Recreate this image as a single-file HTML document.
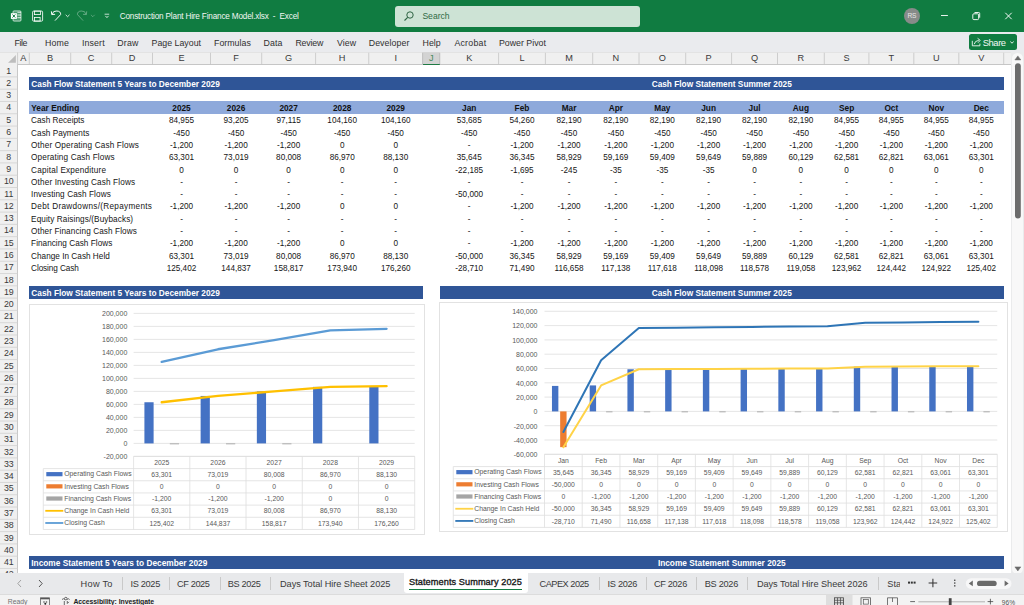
<!DOCTYPE html><html><head><meta charset="utf-8"><style>
*{margin:0;padding:0;box-sizing:border-box}
html,body{width:1024px;height:605px;overflow:hidden;background:#fff;font-family:"Liberation Sans", sans-serif;}
.abs{position:absolute}
.t{position:absolute;white-space:nowrap;line-height:1}
</style></head><body>

<div class="abs" style="left:0;top:0;width:1024px;height:32px;background:#107C41"></div>
<div class="t" style="left:119.7px;top:13px;font-size:8.2px;color:#F2F7F3;letter-spacing:-0.180px">Construction Plant Hire Finance Model.xlsx&nbsp; - &nbsp;Excel</div>
<div class="abs" style="left:395px;top:5.5px;width:245px;height:21px;background:#CDE3D5;border-radius:3px"></div>
<div class="t" style="left:422.4px;top:11.5px;font-size:8.6px;color:#2F6B45">Search</div>
<svg class="abs" style="left:403px;top:10px" width="12" height="12" viewBox="0 0 12 12"><circle cx="7" cy="5" r="3.2" fill="none" stroke="#2E6443" stroke-width="1"/><line x1="4.7" y1="7.3" x2="1.5" y2="10.5" stroke="#2E6443" stroke-width="1.1"/></svg>
<div class="abs" style="left:904.4px;top:8px;width:16px;height:16px;border-radius:50%;background:#878B89"></div>
<div class="t" style="left:907.6px;top:12.6px;font-size:6.6px;color:#E8E8E8;letter-spacing:-0.4px">RS</div>
<svg class="abs" style="left:0;top:0" width="1024" height="32">
<line x1="941" y1="15.5" x2="947.9" y2="15.5" stroke="#fff" stroke-width="0.9"/>
<rect x="972.8" y="13.8" width="5.8" height="5.8" rx="1" fill="none" stroke="#fff" stroke-width="0.9"/>
<path d="M974.5 12.5 h4.2 a1 1 0 0 1 1 1 v4.2" fill="none" stroke="#fff" stroke-width="0.9"/>
<path d="M1005.3 12.8 L1011.7 19.2 M1011.7 12.8 L1005.3 19.2" stroke="#fff" stroke-width="0.95"/>
</svg>
<svg class="abs" style="left:0;top:0" width="120" height="32">
<rect x="13" y="10.9" width="8" height="10.2" rx="1" fill="none" stroke="#fff" stroke-opacity="0.75" stroke-width="0.9"/>
<rect x="13" y="10.9" width="8" height="10.2" rx="1" fill="#fff" fill-opacity="0.25"/>
<path d="M17.4 12.3 h3.6 M17.4 15 h3.6 M17.4 17.7 h3.6" stroke="#fff" stroke-width="0.8"/>
<rect x="10.9" y="13.2" width="6" height="5.7" fill="#fff"/>
<path d="M12.5 14.5 l2.8 3.1 M15.3 14.5 l-2.8 3.1" stroke="#107C41" stroke-width="1"/>
<rect x="32.6" y="11.1" width="10" height="10" rx="1" fill="none" stroke="#fff" stroke-width="0.85"/>
<rect x="34.5" y="11.1" width="6" height="3.5" fill="none" stroke="#fff" stroke-width="0.8"/>
<rect x="34.5" y="17.5" width="5.6" height="3.6" fill="none" stroke="#fff" stroke-width="0.8"/>
<path d="M52.4 14 A4.1 3.3 0 0 1 60.6 14.6 L55 20.6" stroke="#fff" stroke-width="0.95" fill="none"/>
<path d="M51.4 11.3 L51.7 14.6 L55.1 14.3" stroke="#fff" stroke-width="0.95" fill="none"/>
<path d="M65.7 14.8 l1.9 1.9 l1.9 -1.9" stroke="#fff" stroke-width="0.8" fill="none"/>
<g stroke="#fff" stroke-opacity="0.35" fill="none" stroke-width="0.95">
<path d="M85.7 14 A4.1 3.3 0 0 0 77.5 14.6 L83.1 20.6"/>
<path d="M86.7 11.3 L86.4 14.6 L83 14.3"/>
<path d="M90.9 14.8 l1.9 1.9 l1.9 -1.9" stroke-width="0.8"/>
</g>
<line x1="104.6" y1="14.2" x2="109.2" y2="14.2" stroke="#fff" stroke-width="0.75"/>
<path d="M105.4 15.9 l1.55 1.7 l1.55 -1.7" stroke="#fff" stroke-width="0.8" fill="none"/>
</svg>
<div class="abs" style="left:0;top:32px;width:1024px;height:20px;background:#EAEBEE"></div>
<div class="t" style="left:14.5px;top:39px;font-size:8.8px;color:#303030;letter-spacing:-0.426px">File</div>
<div class="t" style="left:45px;top:39px;font-size:8.8px;color:#303030;letter-spacing:0.176px">Home</div>
<div class="t" style="left:82px;top:39px;font-size:8.8px;color:#303030;letter-spacing:0.119px">Insert</div>
<div class="t" style="left:117.3px;top:39px;font-size:8.8px;color:#303030;letter-spacing:0.155px">Draw</div>
<div class="t" style="left:151.5px;top:39px;font-size:8.8px;color:#303030;letter-spacing:0.009px">Page Layout</div>
<div class="t" style="left:214px;top:39px;font-size:8.8px;color:#303030;letter-spacing:0.018px">Formulas</div>
<div class="t" style="left:263.6px;top:39px;font-size:8.8px;color:#303030;letter-spacing:0.071px">Data</div>
<div class="t" style="left:295.4px;top:39px;font-size:8.8px;color:#303030;letter-spacing:-0.191px">Review</div>
<div class="t" style="left:336.9px;top:39px;font-size:8.8px;color:#303030;letter-spacing:0.062px">View</div>
<div class="t" style="left:368.7px;top:39px;font-size:8.8px;color:#303030;letter-spacing:0.086px">Developer</div>
<div class="t" style="left:422.6px;top:39px;font-size:8.8px;color:#303030;letter-spacing:0.001px">Help</div>
<div class="t" style="left:454.4px;top:39px;font-size:8.8px;color:#303030;letter-spacing:0.229px">Acrobat</div>
<div class="t" style="left:498.9px;top:39px;font-size:8.8px;color:#303030;letter-spacing:0.015px">Power Pivot</div>
<div class="abs" style="left:969px;top:34px;width:47.5px;height:16px;background:#107C41;border-radius:2.5px"></div>
<div class="t" style="left:982.8px;top:38.2px;font-size:9.4px;color:#F4F8F5;letter-spacing:-0.45px">Share</div>
<svg class="abs" style="left:969px;top:34px" width="48" height="16">
<path d="M3.3 6.8 v5 h7.6 v-2.2" fill="none" stroke="#fff" stroke-width="0.85"/>
<path d="M5.2 10.2 q0.6 -3.4 4.6 -3.9" fill="none" stroke="#fff" stroke-width="0.85"/>
<path d="M8.6 4.3 l2.6 2 l-2.1 2.4" fill="none" stroke="#fff" stroke-width="0.85"/>
<path d="M41.3 7.6 l1.7 1.6 l1.7 -1.6" stroke="#fff" stroke-width="0.9" fill="none"/>
</svg>
<div class="abs" style="left:0;top:52px;width:1010.8px;height:13px;background:#F0F0F0;border-bottom:1px solid #C6C6C6"></div>
<div class="abs" style="left:422.3px;top:52.2px;width:17.50000000000002px;height:11.8px;background:#D3D3D3;border:0.7px solid #C2C2C2;border-bottom:none"></div>
<div class="abs" style="left:422.7px;top:63.7px;width:17.100000000000023px;height:1.3px;background:#1F7A44"></div>
<svg class="abs" style="left:0;top:52px" width="1011" height="13"><line x1="29.3" y1="0.5" x2="29.3" y2="12.4" stroke="#C4C4C4" stroke-width="0.8"/><line x1="70.7" y1="0.5" x2="70.7" y2="12.4" stroke="#C4C4C4" stroke-width="0.8"/><line x1="111.7" y1="0.5" x2="111.7" y2="12.4" stroke="#C4C4C4" stroke-width="0.8"/><line x1="152.5" y1="0.5" x2="152.5" y2="12.4" stroke="#C4C4C4" stroke-width="0.8"/><line x1="210.5" y1="0.5" x2="210.5" y2="12.4" stroke="#C4C4C4" stroke-width="0.8"/><line x1="261.7" y1="0.5" x2="261.7" y2="12.4" stroke="#C4C4C4" stroke-width="0.8"/><line x1="315.6" y1="0.5" x2="315.6" y2="12.4" stroke="#C4C4C4" stroke-width="0.8"/><line x1="368.75" y1="0.5" x2="368.75" y2="12.4" stroke="#C4C4C4" stroke-width="0.8"/><line x1="422.7" y1="0.5" x2="422.7" y2="12.4" stroke="#C4C4C4" stroke-width="0.8"/><line x1="439.8" y1="0.5" x2="439.8" y2="12.4" stroke="#C4C4C4" stroke-width="0.8"/><line x1="498.6" y1="0.5" x2="498.6" y2="12.4" stroke="#C4C4C4" stroke-width="0.8"/><line x1="545.4" y1="0.5" x2="545.4" y2="12.4" stroke="#C4C4C4" stroke-width="0.8"/><line x1="592.7" y1="0.5" x2="592.7" y2="12.4" stroke="#C4C4C4" stroke-width="0.8"/><line x1="639.0" y1="0.5" x2="639.0" y2="12.4" stroke="#C4C4C4" stroke-width="0.8"/><line x1="685.7" y1="0.5" x2="685.7" y2="12.4" stroke="#C4C4C4" stroke-width="0.8"/><line x1="731.6" y1="0.5" x2="731.6" y2="12.4" stroke="#C4C4C4" stroke-width="0.8"/><line x1="777.5" y1="0.5" x2="777.5" y2="12.4" stroke="#C4C4C4" stroke-width="0.8"/><line x1="824.3" y1="0.5" x2="824.3" y2="12.4" stroke="#C4C4C4" stroke-width="0.8"/><line x1="868.9" y1="0.5" x2="868.9" y2="12.4" stroke="#C4C4C4" stroke-width="0.8"/><line x1="913.8" y1="0.5" x2="913.8" y2="12.4" stroke="#C4C4C4" stroke-width="0.8"/><line x1="958.8" y1="0.5" x2="958.8" y2="12.4" stroke="#C4C4C4" stroke-width="0.8"/><line x1="1003.7" y1="0.5" x2="1003.7" y2="12.4" stroke="#C4C4C4" stroke-width="0.8"/><line x1="17.6" y1="0" x2="17.6" y2="12.4" stroke="#C4C4C4" stroke-width="0.8"/><path d="M8.1 10.7 L15.9 10.7 L15.9 2.9 Z" fill="#BDBDBD"/><line x1="0" y1="0.5" x2="1010.8" y2="0.5" stroke="#DCDCDC" stroke-width="0.7"/></svg>
<div class="t" style="left:17.6px;width:11.7px;text-align:center;top:54.2px;font-size:9.2px;color:#3A3A3A">A</div>
<div class="t" style="left:29.3px;width:41.400000000000006px;text-align:center;top:54.2px;font-size:9.2px;color:#3A3A3A">B</div>
<div class="t" style="left:70.7px;width:41.0px;text-align:center;top:54.2px;font-size:9.2px;color:#3A3A3A">C</div>
<div class="t" style="left:111.7px;width:40.8px;text-align:center;top:54.2px;font-size:9.2px;color:#3A3A3A">D</div>
<div class="t" style="left:152.5px;width:58.0px;text-align:center;top:54.2px;font-size:9.2px;color:#3A3A3A">E</div>
<div class="t" style="left:210.5px;width:51.19999999999999px;text-align:center;top:54.2px;font-size:9.2px;color:#3A3A3A">F</div>
<div class="t" style="left:261.7px;width:53.900000000000034px;text-align:center;top:54.2px;font-size:9.2px;color:#3A3A3A">G</div>
<div class="t" style="left:315.6px;width:53.14999999999998px;text-align:center;top:54.2px;font-size:9.2px;color:#3A3A3A">H</div>
<div class="t" style="left:368.75px;width:53.94999999999999px;text-align:center;top:54.2px;font-size:9.2px;color:#3A3A3A">I</div>
<div class="t" style="left:422.7px;width:17.100000000000023px;text-align:center;top:54.2px;font-size:9.2px;color:#4A8A5E">J</div>
<div class="t" style="left:439.8px;width:58.80000000000001px;text-align:center;top:54.2px;font-size:9.2px;color:#3A3A3A">K</div>
<div class="t" style="left:498.6px;width:46.799999999999955px;text-align:center;top:54.2px;font-size:9.2px;color:#3A3A3A">L</div>
<div class="t" style="left:545.4px;width:47.30000000000007px;text-align:center;top:54.2px;font-size:9.2px;color:#3A3A3A">M</div>
<div class="t" style="left:592.7px;width:46.299999999999955px;text-align:center;top:54.2px;font-size:9.2px;color:#3A3A3A">N</div>
<div class="t" style="left:639.0px;width:46.700000000000045px;text-align:center;top:54.2px;font-size:9.2px;color:#3A3A3A">O</div>
<div class="t" style="left:685.7px;width:45.89999999999998px;text-align:center;top:54.2px;font-size:9.2px;color:#3A3A3A">P</div>
<div class="t" style="left:731.6px;width:45.89999999999998px;text-align:center;top:54.2px;font-size:9.2px;color:#3A3A3A">Q</div>
<div class="t" style="left:777.5px;width:46.799999999999955px;text-align:center;top:54.2px;font-size:9.2px;color:#3A3A3A">R</div>
<div class="t" style="left:824.3px;width:44.60000000000002px;text-align:center;top:54.2px;font-size:9.2px;color:#3A3A3A">S</div>
<div class="t" style="left:868.9px;width:44.89999999999998px;text-align:center;top:54.2px;font-size:9.2px;color:#3A3A3A">T</div>
<div class="t" style="left:913.8px;width:45.0px;text-align:center;top:54.2px;font-size:9.2px;color:#3A3A3A">U</div>
<div class="t" style="left:958.8px;width:44.90000000000009px;text-align:center;top:54.2px;font-size:9.2px;color:#3A3A3A">V</div>
<div class="abs" style="left:0;top:64.4px;width:18.2px;height:509px;background:#F0F0F0;border-right:1px solid #C8C8C8"></div>
<svg class="abs" style="left:0;top:0" width="18" height="574"><line x1="0" y1="76.89" x2="17.6" y2="76.89" stroke="#D0D0D0" stroke-width="0.8"/><line x1="0" y1="89.18" x2="17.6" y2="89.18" stroke="#D0D0D0" stroke-width="0.8"/><line x1="0" y1="101.47" x2="17.6" y2="101.47" stroke="#D0D0D0" stroke-width="0.8"/><line x1="0" y1="113.76" x2="17.6" y2="113.76" stroke="#D0D0D0" stroke-width="0.8"/><line x1="0" y1="126.05" x2="17.6" y2="126.05" stroke="#D0D0D0" stroke-width="0.8"/><line x1="0" y1="138.34" x2="17.6" y2="138.34" stroke="#D0D0D0" stroke-width="0.8"/><line x1="0" y1="150.63" x2="17.6" y2="150.63" stroke="#D0D0D0" stroke-width="0.8"/><line x1="0" y1="162.92" x2="17.6" y2="162.92" stroke="#D0D0D0" stroke-width="0.8"/><line x1="0" y1="175.21" x2="17.6" y2="175.21" stroke="#D0D0D0" stroke-width="0.8"/><line x1="0" y1="187.50" x2="17.6" y2="187.50" stroke="#D0D0D0" stroke-width="0.8"/><line x1="0" y1="199.79" x2="17.6" y2="199.79" stroke="#D0D0D0" stroke-width="0.8"/><line x1="0" y1="212.08" x2="17.6" y2="212.08" stroke="#D0D0D0" stroke-width="0.8"/><line x1="0" y1="224.37" x2="17.6" y2="224.37" stroke="#D0D0D0" stroke-width="0.8"/><line x1="0" y1="236.66" x2="17.6" y2="236.66" stroke="#D0D0D0" stroke-width="0.8"/><line x1="0" y1="248.95" x2="17.6" y2="248.95" stroke="#D0D0D0" stroke-width="0.8"/><line x1="0" y1="261.24" x2="17.6" y2="261.24" stroke="#D0D0D0" stroke-width="0.8"/><line x1="0" y1="273.53" x2="17.6" y2="273.53" stroke="#D0D0D0" stroke-width="0.8"/><line x1="0" y1="285.82" x2="17.6" y2="285.82" stroke="#D0D0D0" stroke-width="0.8"/><line x1="0" y1="298.11" x2="17.6" y2="298.11" stroke="#D0D0D0" stroke-width="0.8"/><line x1="0" y1="310.40" x2="17.6" y2="310.40" stroke="#D0D0D0" stroke-width="0.8"/><line x1="0" y1="322.69" x2="17.6" y2="322.69" stroke="#D0D0D0" stroke-width="0.8"/><line x1="0" y1="334.98" x2="17.6" y2="334.98" stroke="#D0D0D0" stroke-width="0.8"/><line x1="0" y1="347.27" x2="17.6" y2="347.27" stroke="#D0D0D0" stroke-width="0.8"/><line x1="0" y1="359.56" x2="17.6" y2="359.56" stroke="#D0D0D0" stroke-width="0.8"/><line x1="0" y1="371.85" x2="17.6" y2="371.85" stroke="#D0D0D0" stroke-width="0.8"/><line x1="0" y1="384.14" x2="17.6" y2="384.14" stroke="#D0D0D0" stroke-width="0.8"/><line x1="0" y1="396.43" x2="17.6" y2="396.43" stroke="#D0D0D0" stroke-width="0.8"/><line x1="0" y1="408.72" x2="17.6" y2="408.72" stroke="#D0D0D0" stroke-width="0.8"/><line x1="0" y1="421.01" x2="17.6" y2="421.01" stroke="#D0D0D0" stroke-width="0.8"/><line x1="0" y1="433.30" x2="17.6" y2="433.30" stroke="#D0D0D0" stroke-width="0.8"/><line x1="0" y1="445.59" x2="17.6" y2="445.59" stroke="#D0D0D0" stroke-width="0.8"/><line x1="0" y1="457.88" x2="17.6" y2="457.88" stroke="#D0D0D0" stroke-width="0.8"/><line x1="0" y1="470.17" x2="17.6" y2="470.17" stroke="#D0D0D0" stroke-width="0.8"/><line x1="0" y1="482.46" x2="17.6" y2="482.46" stroke="#D0D0D0" stroke-width="0.8"/><line x1="0" y1="494.75" x2="17.6" y2="494.75" stroke="#D0D0D0" stroke-width="0.8"/><line x1="0" y1="507.04" x2="17.6" y2="507.04" stroke="#D0D0D0" stroke-width="0.8"/><line x1="0" y1="519.33" x2="17.6" y2="519.33" stroke="#D0D0D0" stroke-width="0.8"/><line x1="0" y1="531.62" x2="17.6" y2="531.62" stroke="#D0D0D0" stroke-width="0.8"/><line x1="0" y1="543.91" x2="17.6" y2="543.91" stroke="#D0D0D0" stroke-width="0.8"/><line x1="0" y1="556.20" x2="17.6" y2="556.20" stroke="#D0D0D0" stroke-width="0.8"/><line x1="0" y1="568.49" x2="17.6" y2="568.49" stroke="#D0D0D0" stroke-width="0.8"/></svg>
<div class="t" style="left:0;width:17.6px;text-align:center;top:66.60px;font-size:8.8px;color:#3A3A3A">1</div>
<div class="t" style="left:0;width:17.6px;text-align:center;top:78.89px;font-size:8.8px;color:#3A3A3A">2</div>
<div class="t" style="left:0;width:17.6px;text-align:center;top:91.18px;font-size:8.8px;color:#3A3A3A">3</div>
<div class="t" style="left:0;width:17.6px;text-align:center;top:103.47px;font-size:8.8px;color:#3A3A3A">4</div>
<div class="t" style="left:0;width:17.6px;text-align:center;top:115.76px;font-size:8.8px;color:#3A3A3A">5</div>
<div class="t" style="left:0;width:17.6px;text-align:center;top:128.05px;font-size:8.8px;color:#3A3A3A">6</div>
<div class="t" style="left:0;width:17.6px;text-align:center;top:140.34px;font-size:8.8px;color:#3A3A3A">7</div>
<div class="t" style="left:0;width:17.6px;text-align:center;top:152.63px;font-size:8.8px;color:#3A3A3A">8</div>
<div class="t" style="left:0;width:17.6px;text-align:center;top:164.92px;font-size:8.8px;color:#3A3A3A">9</div>
<div class="t" style="left:0;width:17.6px;text-align:center;top:177.21px;font-size:8.8px;color:#3A3A3A">10</div>
<div class="t" style="left:0;width:17.6px;text-align:center;top:189.50px;font-size:8.8px;color:#3A3A3A">11</div>
<div class="t" style="left:0;width:17.6px;text-align:center;top:201.79px;font-size:8.8px;color:#3A3A3A">12</div>
<div class="t" style="left:0;width:17.6px;text-align:center;top:214.08px;font-size:8.8px;color:#3A3A3A">13</div>
<div class="t" style="left:0;width:17.6px;text-align:center;top:226.37px;font-size:8.8px;color:#3A3A3A">14</div>
<div class="t" style="left:0;width:17.6px;text-align:center;top:238.66px;font-size:8.8px;color:#3A3A3A">15</div>
<div class="t" style="left:0;width:17.6px;text-align:center;top:250.95px;font-size:8.8px;color:#3A3A3A">16</div>
<div class="t" style="left:0;width:17.6px;text-align:center;top:263.24px;font-size:8.8px;color:#3A3A3A">17</div>
<div class="t" style="left:0;width:17.6px;text-align:center;top:275.53px;font-size:8.8px;color:#3A3A3A">18</div>
<div class="t" style="left:0;width:17.6px;text-align:center;top:287.82px;font-size:8.8px;color:#3A3A3A">19</div>
<div class="t" style="left:0;width:17.6px;text-align:center;top:300.11px;font-size:8.8px;color:#3A3A3A">20</div>
<div class="t" style="left:0;width:17.6px;text-align:center;top:312.40px;font-size:8.8px;color:#3A3A3A">21</div>
<div class="t" style="left:0;width:17.6px;text-align:center;top:324.69px;font-size:8.8px;color:#3A3A3A">22</div>
<div class="t" style="left:0;width:17.6px;text-align:center;top:336.98px;font-size:8.8px;color:#3A3A3A">23</div>
<div class="t" style="left:0;width:17.6px;text-align:center;top:349.27px;font-size:8.8px;color:#3A3A3A">24</div>
<div class="t" style="left:0;width:17.6px;text-align:center;top:361.56px;font-size:8.8px;color:#3A3A3A">25</div>
<div class="t" style="left:0;width:17.6px;text-align:center;top:373.85px;font-size:8.8px;color:#3A3A3A">26</div>
<div class="t" style="left:0;width:17.6px;text-align:center;top:386.14px;font-size:8.8px;color:#3A3A3A">27</div>
<div class="t" style="left:0;width:17.6px;text-align:center;top:398.43px;font-size:8.8px;color:#3A3A3A">28</div>
<div class="t" style="left:0;width:17.6px;text-align:center;top:410.72px;font-size:8.8px;color:#3A3A3A">29</div>
<div class="t" style="left:0;width:17.6px;text-align:center;top:423.01px;font-size:8.8px;color:#3A3A3A">30</div>
<div class="t" style="left:0;width:17.6px;text-align:center;top:435.30px;font-size:8.8px;color:#3A3A3A">31</div>
<div class="t" style="left:0;width:17.6px;text-align:center;top:447.59px;font-size:8.8px;color:#3A3A3A">32</div>
<div class="t" style="left:0;width:17.6px;text-align:center;top:459.88px;font-size:8.8px;color:#3A3A3A">33</div>
<div class="t" style="left:0;width:17.6px;text-align:center;top:472.17px;font-size:8.8px;color:#3A3A3A">34</div>
<div class="t" style="left:0;width:17.6px;text-align:center;top:484.46px;font-size:8.8px;color:#3A3A3A">35</div>
<div class="t" style="left:0;width:17.6px;text-align:center;top:496.75px;font-size:8.8px;color:#3A3A3A">36</div>
<div class="t" style="left:0;width:17.6px;text-align:center;top:509.04px;font-size:8.8px;color:#3A3A3A">37</div>
<div class="t" style="left:0;width:17.6px;text-align:center;top:521.33px;font-size:8.8px;color:#3A3A3A">38</div>
<div class="t" style="left:0;width:17.6px;text-align:center;top:533.62px;font-size:8.8px;color:#3A3A3A">39</div>
<div class="t" style="left:0;width:17.6px;text-align:center;top:545.91px;font-size:8.8px;color:#3A3A3A">40</div>
<div class="t" style="left:0;width:17.6px;text-align:center;top:558.20px;font-size:8.8px;color:#3A3A3A">41</div>
<div class="t" style="left:0;width:17.6px;text-align:center;top:570.49px;font-size:8.8px;color:#3A3A3A">42</div>
<div class="abs" style="left:29.3px;top:76.89px;width:974.40px;height:12.74px;background:#2F5597"></div>
<div class="t" style="left:31.30px;top:79.59px;font-size:8.3px;font-weight:bold;color:#fff;">Cash Flow Statement 5 Years to December 2029</div>
<div class="t" style="left:439.80px;width:563.90px;text-align:center;top:79.59px;font-size:8.3px;font-weight:bold;color:#fff;">Cash Flow Statement Summer 2025</div>
<div class="abs" style="left:29.3px;top:101.47px;width:974.40px;height:12.74px;background:#8EA9DB"></div>
<div class="t" style="left:31.30px;top:104.17px;font-size:8.3px;font-weight:bold;color:#111;">Year Ending</div>
<div class="t" style="left:152.50px;width:58.00px;text-align:center;top:104.17px;font-size:8.3px;font-weight:bold;color:#111;">2025</div>
<div class="t" style="left:210.50px;width:51.20px;text-align:center;top:104.17px;font-size:8.3px;font-weight:bold;color:#111;">2026</div>
<div class="t" style="left:261.70px;width:53.90px;text-align:center;top:104.17px;font-size:8.3px;font-weight:bold;color:#111;">2027</div>
<div class="t" style="left:315.60px;width:53.15px;text-align:center;top:104.17px;font-size:8.3px;font-weight:bold;color:#111;">2028</div>
<div class="t" style="left:368.75px;width:53.95px;text-align:center;top:104.17px;font-size:8.3px;font-weight:bold;color:#111;">2029</div>
<div class="t" style="left:439.80px;width:58.80px;text-align:center;top:104.17px;font-size:8.3px;font-weight:bold;color:#111;">Jan</div>
<div class="t" style="left:498.60px;width:46.80px;text-align:center;top:104.17px;font-size:8.3px;font-weight:bold;color:#111;">Feb</div>
<div class="t" style="left:545.40px;width:47.30px;text-align:center;top:104.17px;font-size:8.3px;font-weight:bold;color:#111;">Mar</div>
<div class="t" style="left:592.70px;width:46.30px;text-align:center;top:104.17px;font-size:8.3px;font-weight:bold;color:#111;">Apr</div>
<div class="t" style="left:639.00px;width:46.70px;text-align:center;top:104.17px;font-size:8.3px;font-weight:bold;color:#111;">May</div>
<div class="t" style="left:685.70px;width:45.90px;text-align:center;top:104.17px;font-size:8.3px;font-weight:bold;color:#111;">Jun</div>
<div class="t" style="left:731.60px;width:45.90px;text-align:center;top:104.17px;font-size:8.3px;font-weight:bold;color:#111;">Jul</div>
<div class="t" style="left:777.50px;width:46.80px;text-align:center;top:104.17px;font-size:8.3px;font-weight:bold;color:#111;">Aug</div>
<div class="t" style="left:824.30px;width:44.60px;text-align:center;top:104.17px;font-size:8.3px;font-weight:bold;color:#111;">Sep</div>
<div class="t" style="left:868.90px;width:44.90px;text-align:center;top:104.17px;font-size:8.3px;font-weight:bold;color:#111;">Oct</div>
<div class="t" style="left:913.80px;width:45.00px;text-align:center;top:104.17px;font-size:8.3px;font-weight:bold;color:#111;">Nov</div>
<div class="t" style="left:958.80px;width:44.90px;text-align:center;top:104.17px;font-size:8.3px;font-weight:bold;color:#111;">Dec</div>
<div class="t" style="left:31.10px;top:117.46px;font-size:8.2px;font-weight:normal;color:#151515;letter-spacing:0.007px;">Cash Receipts</div>
<div class="t" style="left:152.50px;width:58.00px;text-align:center;top:117.46px;font-size:8.2px;font-weight:normal;color:#151515;">84,955</div>
<div class="t" style="left:210.50px;width:51.20px;text-align:center;top:117.46px;font-size:8.2px;font-weight:normal;color:#151515;">93,205</div>
<div class="t" style="left:261.70px;width:53.90px;text-align:center;top:117.46px;font-size:8.2px;font-weight:normal;color:#151515;">97,115</div>
<div class="t" style="left:315.60px;width:53.15px;text-align:center;top:117.46px;font-size:8.2px;font-weight:normal;color:#151515;">104,160</div>
<div class="t" style="left:368.75px;width:53.95px;text-align:center;top:117.46px;font-size:8.2px;font-weight:normal;color:#151515;">104,160</div>
<div class="t" style="left:439.80px;width:58.80px;text-align:center;top:117.46px;font-size:8.2px;font-weight:normal;color:#151515;">53,685</div>
<div class="t" style="left:498.60px;width:46.80px;text-align:center;top:117.46px;font-size:8.2px;font-weight:normal;color:#151515;">54,260</div>
<div class="t" style="left:545.40px;width:47.30px;text-align:center;top:117.46px;font-size:8.2px;font-weight:normal;color:#151515;">82,190</div>
<div class="t" style="left:592.70px;width:46.30px;text-align:center;top:117.46px;font-size:8.2px;font-weight:normal;color:#151515;">82,190</div>
<div class="t" style="left:639.00px;width:46.70px;text-align:center;top:117.46px;font-size:8.2px;font-weight:normal;color:#151515;">82,190</div>
<div class="t" style="left:685.70px;width:45.90px;text-align:center;top:117.46px;font-size:8.2px;font-weight:normal;color:#151515;">82,190</div>
<div class="t" style="left:731.60px;width:45.90px;text-align:center;top:117.46px;font-size:8.2px;font-weight:normal;color:#151515;">82,190</div>
<div class="t" style="left:777.50px;width:46.80px;text-align:center;top:117.46px;font-size:8.2px;font-weight:normal;color:#151515;">82,190</div>
<div class="t" style="left:824.30px;width:44.60px;text-align:center;top:117.46px;font-size:8.2px;font-weight:normal;color:#151515;">84,955</div>
<div class="t" style="left:868.90px;width:44.90px;text-align:center;top:117.46px;font-size:8.2px;font-weight:normal;color:#151515;">84,955</div>
<div class="t" style="left:913.80px;width:45.00px;text-align:center;top:117.46px;font-size:8.2px;font-weight:normal;color:#151515;">84,955</div>
<div class="t" style="left:958.80px;width:44.90px;text-align:center;top:117.46px;font-size:8.2px;font-weight:normal;color:#151515;">84,955</div>
<div class="t" style="left:31.10px;top:129.75px;font-size:8.2px;font-weight:normal;color:#151515;letter-spacing:0.035px;">Cash Payments</div>
<div class="t" style="left:152.50px;width:58.00px;text-align:center;top:129.75px;font-size:8.2px;font-weight:normal;color:#151515;">-450</div>
<div class="t" style="left:210.50px;width:51.20px;text-align:center;top:129.75px;font-size:8.2px;font-weight:normal;color:#151515;">-450</div>
<div class="t" style="left:261.70px;width:53.90px;text-align:center;top:129.75px;font-size:8.2px;font-weight:normal;color:#151515;">-450</div>
<div class="t" style="left:315.60px;width:53.15px;text-align:center;top:129.75px;font-size:8.2px;font-weight:normal;color:#151515;">-450</div>
<div class="t" style="left:368.75px;width:53.95px;text-align:center;top:129.75px;font-size:8.2px;font-weight:normal;color:#151515;">-450</div>
<div class="t" style="left:439.80px;width:58.80px;text-align:center;top:129.75px;font-size:8.2px;font-weight:normal;color:#151515;">-450</div>
<div class="t" style="left:498.60px;width:46.80px;text-align:center;top:129.75px;font-size:8.2px;font-weight:normal;color:#151515;">-450</div>
<div class="t" style="left:545.40px;width:47.30px;text-align:center;top:129.75px;font-size:8.2px;font-weight:normal;color:#151515;">-450</div>
<div class="t" style="left:592.70px;width:46.30px;text-align:center;top:129.75px;font-size:8.2px;font-weight:normal;color:#151515;">-450</div>
<div class="t" style="left:639.00px;width:46.70px;text-align:center;top:129.75px;font-size:8.2px;font-weight:normal;color:#151515;">-450</div>
<div class="t" style="left:685.70px;width:45.90px;text-align:center;top:129.75px;font-size:8.2px;font-weight:normal;color:#151515;">-450</div>
<div class="t" style="left:731.60px;width:45.90px;text-align:center;top:129.75px;font-size:8.2px;font-weight:normal;color:#151515;">-450</div>
<div class="t" style="left:777.50px;width:46.80px;text-align:center;top:129.75px;font-size:8.2px;font-weight:normal;color:#151515;">-450</div>
<div class="t" style="left:824.30px;width:44.60px;text-align:center;top:129.75px;font-size:8.2px;font-weight:normal;color:#151515;">-450</div>
<div class="t" style="left:868.90px;width:44.90px;text-align:center;top:129.75px;font-size:8.2px;font-weight:normal;color:#151515;">-450</div>
<div class="t" style="left:913.80px;width:45.00px;text-align:center;top:129.75px;font-size:8.2px;font-weight:normal;color:#151515;">-450</div>
<div class="t" style="left:958.80px;width:44.90px;text-align:center;top:129.75px;font-size:8.2px;font-weight:normal;color:#151515;">-450</div>
<div class="t" style="left:31.10px;top:142.04px;font-size:8.2px;font-weight:normal;color:#151515;letter-spacing:0.160px;">Other Operating Cash Flows</div>
<div class="t" style="left:152.50px;width:58.00px;text-align:center;top:142.04px;font-size:8.2px;font-weight:normal;color:#151515;">-1,200</div>
<div class="t" style="left:210.50px;width:51.20px;text-align:center;top:142.04px;font-size:8.2px;font-weight:normal;color:#151515;">-1,200</div>
<div class="t" style="left:261.70px;width:53.90px;text-align:center;top:142.04px;font-size:8.2px;font-weight:normal;color:#151515;">-1,200</div>
<div class="t" style="left:315.60px;width:53.15px;text-align:center;top:142.04px;font-size:8.2px;font-weight:normal;color:#151515;">0</div>
<div class="t" style="left:368.75px;width:53.95px;text-align:center;top:142.04px;font-size:8.2px;font-weight:normal;color:#151515;">0</div>
<div class="t" style="left:439.80px;width:58.80px;text-align:center;top:142.04px;font-size:8.2px;font-weight:normal;color:#151515;">-</div>
<div class="t" style="left:498.60px;width:46.80px;text-align:center;top:142.04px;font-size:8.2px;font-weight:normal;color:#151515;">-1,200</div>
<div class="t" style="left:545.40px;width:47.30px;text-align:center;top:142.04px;font-size:8.2px;font-weight:normal;color:#151515;">-1,200</div>
<div class="t" style="left:592.70px;width:46.30px;text-align:center;top:142.04px;font-size:8.2px;font-weight:normal;color:#151515;">-1,200</div>
<div class="t" style="left:639.00px;width:46.70px;text-align:center;top:142.04px;font-size:8.2px;font-weight:normal;color:#151515;">-1,200</div>
<div class="t" style="left:685.70px;width:45.90px;text-align:center;top:142.04px;font-size:8.2px;font-weight:normal;color:#151515;">-1,200</div>
<div class="t" style="left:731.60px;width:45.90px;text-align:center;top:142.04px;font-size:8.2px;font-weight:normal;color:#151515;">-1,200</div>
<div class="t" style="left:777.50px;width:46.80px;text-align:center;top:142.04px;font-size:8.2px;font-weight:normal;color:#151515;">-1,200</div>
<div class="t" style="left:824.30px;width:44.60px;text-align:center;top:142.04px;font-size:8.2px;font-weight:normal;color:#151515;">-1,200</div>
<div class="t" style="left:868.90px;width:44.90px;text-align:center;top:142.04px;font-size:8.2px;font-weight:normal;color:#151515;">-1,200</div>
<div class="t" style="left:913.80px;width:45.00px;text-align:center;top:142.04px;font-size:8.2px;font-weight:normal;color:#151515;">-1,200</div>
<div class="t" style="left:958.80px;width:44.90px;text-align:center;top:142.04px;font-size:8.2px;font-weight:normal;color:#151515;">-1,200</div>
<div class="t" style="left:31.10px;top:154.33px;font-size:8.2px;font-weight:normal;color:#151515;letter-spacing:0.131px;">Operating Cash Flows</div>
<div class="t" style="left:152.50px;width:58.00px;text-align:center;top:154.33px;font-size:8.2px;font-weight:normal;color:#151515;">63,301</div>
<div class="t" style="left:210.50px;width:51.20px;text-align:center;top:154.33px;font-size:8.2px;font-weight:normal;color:#151515;">73,019</div>
<div class="t" style="left:261.70px;width:53.90px;text-align:center;top:154.33px;font-size:8.2px;font-weight:normal;color:#151515;">80,008</div>
<div class="t" style="left:315.60px;width:53.15px;text-align:center;top:154.33px;font-size:8.2px;font-weight:normal;color:#151515;">86,970</div>
<div class="t" style="left:368.75px;width:53.95px;text-align:center;top:154.33px;font-size:8.2px;font-weight:normal;color:#151515;">88,130</div>
<div class="t" style="left:439.80px;width:58.80px;text-align:center;top:154.33px;font-size:8.2px;font-weight:normal;color:#151515;">35,645</div>
<div class="t" style="left:498.60px;width:46.80px;text-align:center;top:154.33px;font-size:8.2px;font-weight:normal;color:#151515;">36,345</div>
<div class="t" style="left:545.40px;width:47.30px;text-align:center;top:154.33px;font-size:8.2px;font-weight:normal;color:#151515;">58,929</div>
<div class="t" style="left:592.70px;width:46.30px;text-align:center;top:154.33px;font-size:8.2px;font-weight:normal;color:#151515;">59,169</div>
<div class="t" style="left:639.00px;width:46.70px;text-align:center;top:154.33px;font-size:8.2px;font-weight:normal;color:#151515;">59,409</div>
<div class="t" style="left:685.70px;width:45.90px;text-align:center;top:154.33px;font-size:8.2px;font-weight:normal;color:#151515;">59,649</div>
<div class="t" style="left:731.60px;width:45.90px;text-align:center;top:154.33px;font-size:8.2px;font-weight:normal;color:#151515;">59,889</div>
<div class="t" style="left:777.50px;width:46.80px;text-align:center;top:154.33px;font-size:8.2px;font-weight:normal;color:#151515;">60,129</div>
<div class="t" style="left:824.30px;width:44.60px;text-align:center;top:154.33px;font-size:8.2px;font-weight:normal;color:#151515;">62,581</div>
<div class="t" style="left:868.90px;width:44.90px;text-align:center;top:154.33px;font-size:8.2px;font-weight:normal;color:#151515;">62,821</div>
<div class="t" style="left:913.80px;width:45.00px;text-align:center;top:154.33px;font-size:8.2px;font-weight:normal;color:#151515;">63,061</div>
<div class="t" style="left:958.80px;width:44.90px;text-align:center;top:154.33px;font-size:8.2px;font-weight:normal;color:#151515;">63,301</div>
<div class="t" style="left:31.10px;top:166.62px;font-size:8.2px;font-weight:normal;color:#151515;letter-spacing:0.191px;">Capital Expenditure</div>
<div class="t" style="left:152.50px;width:58.00px;text-align:center;top:166.62px;font-size:8.2px;font-weight:normal;color:#151515;">0</div>
<div class="t" style="left:210.50px;width:51.20px;text-align:center;top:166.62px;font-size:8.2px;font-weight:normal;color:#151515;">0</div>
<div class="t" style="left:261.70px;width:53.90px;text-align:center;top:166.62px;font-size:8.2px;font-weight:normal;color:#151515;">0</div>
<div class="t" style="left:315.60px;width:53.15px;text-align:center;top:166.62px;font-size:8.2px;font-weight:normal;color:#151515;">0</div>
<div class="t" style="left:368.75px;width:53.95px;text-align:center;top:166.62px;font-size:8.2px;font-weight:normal;color:#151515;">0</div>
<div class="t" style="left:439.80px;width:58.80px;text-align:center;top:166.62px;font-size:8.2px;font-weight:normal;color:#151515;">-22,185</div>
<div class="t" style="left:498.60px;width:46.80px;text-align:center;top:166.62px;font-size:8.2px;font-weight:normal;color:#151515;">-1,695</div>
<div class="t" style="left:545.40px;width:47.30px;text-align:center;top:166.62px;font-size:8.2px;font-weight:normal;color:#151515;">-245</div>
<div class="t" style="left:592.70px;width:46.30px;text-align:center;top:166.62px;font-size:8.2px;font-weight:normal;color:#151515;">-35</div>
<div class="t" style="left:639.00px;width:46.70px;text-align:center;top:166.62px;font-size:8.2px;font-weight:normal;color:#151515;">-35</div>
<div class="t" style="left:685.70px;width:45.90px;text-align:center;top:166.62px;font-size:8.2px;font-weight:normal;color:#151515;">-35</div>
<div class="t" style="left:731.60px;width:45.90px;text-align:center;top:166.62px;font-size:8.2px;font-weight:normal;color:#151515;">0</div>
<div class="t" style="left:777.50px;width:46.80px;text-align:center;top:166.62px;font-size:8.2px;font-weight:normal;color:#151515;">0</div>
<div class="t" style="left:824.30px;width:44.60px;text-align:center;top:166.62px;font-size:8.2px;font-weight:normal;color:#151515;">0</div>
<div class="t" style="left:868.90px;width:44.90px;text-align:center;top:166.62px;font-size:8.2px;font-weight:normal;color:#151515;">0</div>
<div class="t" style="left:913.80px;width:45.00px;text-align:center;top:166.62px;font-size:8.2px;font-weight:normal;color:#151515;">0</div>
<div class="t" style="left:958.80px;width:44.90px;text-align:center;top:166.62px;font-size:8.2px;font-weight:normal;color:#151515;">0</div>
<div class="t" style="left:31.10px;top:178.91px;font-size:8.2px;font-weight:normal;color:#151515;letter-spacing:0.135px;">Other Investing Cash Flows</div>
<div class="t" style="left:152.50px;width:58.00px;text-align:center;top:178.91px;font-size:8.2px;font-weight:normal;color:#151515;">-</div>
<div class="t" style="left:210.50px;width:51.20px;text-align:center;top:178.91px;font-size:8.2px;font-weight:normal;color:#151515;">-</div>
<div class="t" style="left:261.70px;width:53.90px;text-align:center;top:178.91px;font-size:8.2px;font-weight:normal;color:#151515;">-</div>
<div class="t" style="left:315.60px;width:53.15px;text-align:center;top:178.91px;font-size:8.2px;font-weight:normal;color:#151515;">-</div>
<div class="t" style="left:368.75px;width:53.95px;text-align:center;top:178.91px;font-size:8.2px;font-weight:normal;color:#151515;">-</div>
<div class="t" style="left:439.80px;width:58.80px;text-align:center;top:178.91px;font-size:8.2px;font-weight:normal;color:#151515;">-</div>
<div class="t" style="left:498.60px;width:46.80px;text-align:center;top:178.91px;font-size:8.2px;font-weight:normal;color:#151515;">-</div>
<div class="t" style="left:545.40px;width:47.30px;text-align:center;top:178.91px;font-size:8.2px;font-weight:normal;color:#151515;">-</div>
<div class="t" style="left:592.70px;width:46.30px;text-align:center;top:178.91px;font-size:8.2px;font-weight:normal;color:#151515;">-</div>
<div class="t" style="left:639.00px;width:46.70px;text-align:center;top:178.91px;font-size:8.2px;font-weight:normal;color:#151515;">-</div>
<div class="t" style="left:685.70px;width:45.90px;text-align:center;top:178.91px;font-size:8.2px;font-weight:normal;color:#151515;">-</div>
<div class="t" style="left:731.60px;width:45.90px;text-align:center;top:178.91px;font-size:8.2px;font-weight:normal;color:#151515;">-</div>
<div class="t" style="left:777.50px;width:46.80px;text-align:center;top:178.91px;font-size:8.2px;font-weight:normal;color:#151515;">-</div>
<div class="t" style="left:824.30px;width:44.60px;text-align:center;top:178.91px;font-size:8.2px;font-weight:normal;color:#151515;">-</div>
<div class="t" style="left:868.90px;width:44.90px;text-align:center;top:178.91px;font-size:8.2px;font-weight:normal;color:#151515;">-</div>
<div class="t" style="left:913.80px;width:45.00px;text-align:center;top:178.91px;font-size:8.2px;font-weight:normal;color:#151515;">-</div>
<div class="t" style="left:958.80px;width:44.90px;text-align:center;top:178.91px;font-size:8.2px;font-weight:normal;color:#151515;">-</div>
<div class="t" style="left:31.10px;top:191.20px;font-size:8.2px;font-weight:normal;color:#151515;letter-spacing:0.099px;">Investing Cash Flows</div>
<div class="t" style="left:152.50px;width:58.00px;text-align:center;top:191.20px;font-size:8.2px;font-weight:normal;color:#151515;">-</div>
<div class="t" style="left:210.50px;width:51.20px;text-align:center;top:191.20px;font-size:8.2px;font-weight:normal;color:#151515;">-</div>
<div class="t" style="left:261.70px;width:53.90px;text-align:center;top:191.20px;font-size:8.2px;font-weight:normal;color:#151515;">-</div>
<div class="t" style="left:315.60px;width:53.15px;text-align:center;top:191.20px;font-size:8.2px;font-weight:normal;color:#151515;">-</div>
<div class="t" style="left:368.75px;width:53.95px;text-align:center;top:191.20px;font-size:8.2px;font-weight:normal;color:#151515;">-</div>
<div class="t" style="left:439.80px;width:58.80px;text-align:center;top:191.20px;font-size:8.2px;font-weight:normal;color:#151515;">-50,000</div>
<div class="t" style="left:498.60px;width:46.80px;text-align:center;top:191.20px;font-size:8.2px;font-weight:normal;color:#151515;">-</div>
<div class="t" style="left:545.40px;width:47.30px;text-align:center;top:191.20px;font-size:8.2px;font-weight:normal;color:#151515;">-</div>
<div class="t" style="left:592.70px;width:46.30px;text-align:center;top:191.20px;font-size:8.2px;font-weight:normal;color:#151515;">-</div>
<div class="t" style="left:639.00px;width:46.70px;text-align:center;top:191.20px;font-size:8.2px;font-weight:normal;color:#151515;">-</div>
<div class="t" style="left:685.70px;width:45.90px;text-align:center;top:191.20px;font-size:8.2px;font-weight:normal;color:#151515;">-</div>
<div class="t" style="left:731.60px;width:45.90px;text-align:center;top:191.20px;font-size:8.2px;font-weight:normal;color:#151515;">-</div>
<div class="t" style="left:777.50px;width:46.80px;text-align:center;top:191.20px;font-size:8.2px;font-weight:normal;color:#151515;">-</div>
<div class="t" style="left:824.30px;width:44.60px;text-align:center;top:191.20px;font-size:8.2px;font-weight:normal;color:#151515;">-</div>
<div class="t" style="left:868.90px;width:44.90px;text-align:center;top:191.20px;font-size:8.2px;font-weight:normal;color:#151515;">-</div>
<div class="t" style="left:913.80px;width:45.00px;text-align:center;top:191.20px;font-size:8.2px;font-weight:normal;color:#151515;">-</div>
<div class="t" style="left:958.80px;width:44.90px;text-align:center;top:191.20px;font-size:8.2px;font-weight:normal;color:#151515;">-</div>
<div class="t" style="left:31.10px;top:203.49px;font-size:8.2px;font-weight:normal;color:#151515;letter-spacing:0.301px;">Debt Drawdowns/(Repayments</div>
<div class="t" style="left:152.50px;width:58.00px;text-align:center;top:203.49px;font-size:8.2px;font-weight:normal;color:#151515;">-1,200</div>
<div class="t" style="left:210.50px;width:51.20px;text-align:center;top:203.49px;font-size:8.2px;font-weight:normal;color:#151515;">-1,200</div>
<div class="t" style="left:261.70px;width:53.90px;text-align:center;top:203.49px;font-size:8.2px;font-weight:normal;color:#151515;">-1,200</div>
<div class="t" style="left:315.60px;width:53.15px;text-align:center;top:203.49px;font-size:8.2px;font-weight:normal;color:#151515;">0</div>
<div class="t" style="left:368.75px;width:53.95px;text-align:center;top:203.49px;font-size:8.2px;font-weight:normal;color:#151515;">0</div>
<div class="t" style="left:439.80px;width:58.80px;text-align:center;top:203.49px;font-size:8.2px;font-weight:normal;color:#151515;">-</div>
<div class="t" style="left:498.60px;width:46.80px;text-align:center;top:203.49px;font-size:8.2px;font-weight:normal;color:#151515;">-1,200</div>
<div class="t" style="left:545.40px;width:47.30px;text-align:center;top:203.49px;font-size:8.2px;font-weight:normal;color:#151515;">-1,200</div>
<div class="t" style="left:592.70px;width:46.30px;text-align:center;top:203.49px;font-size:8.2px;font-weight:normal;color:#151515;">-1,200</div>
<div class="t" style="left:639.00px;width:46.70px;text-align:center;top:203.49px;font-size:8.2px;font-weight:normal;color:#151515;">-1,200</div>
<div class="t" style="left:685.70px;width:45.90px;text-align:center;top:203.49px;font-size:8.2px;font-weight:normal;color:#151515;">-1,200</div>
<div class="t" style="left:731.60px;width:45.90px;text-align:center;top:203.49px;font-size:8.2px;font-weight:normal;color:#151515;">-1,200</div>
<div class="t" style="left:777.50px;width:46.80px;text-align:center;top:203.49px;font-size:8.2px;font-weight:normal;color:#151515;">-1,200</div>
<div class="t" style="left:824.30px;width:44.60px;text-align:center;top:203.49px;font-size:8.2px;font-weight:normal;color:#151515;">-1,200</div>
<div class="t" style="left:868.90px;width:44.90px;text-align:center;top:203.49px;font-size:8.2px;font-weight:normal;color:#151515;">-1,200</div>
<div class="t" style="left:913.80px;width:45.00px;text-align:center;top:203.49px;font-size:8.2px;font-weight:normal;color:#151515;">-1,200</div>
<div class="t" style="left:958.80px;width:44.90px;text-align:center;top:203.49px;font-size:8.2px;font-weight:normal;color:#151515;">-1,200</div>
<div class="t" style="left:31.10px;top:215.78px;font-size:8.2px;font-weight:normal;color:#151515;letter-spacing:0.092px;">Equity Raisings/(Buybacks)</div>
<div class="t" style="left:152.50px;width:58.00px;text-align:center;top:215.78px;font-size:8.2px;font-weight:normal;color:#151515;">-</div>
<div class="t" style="left:210.50px;width:51.20px;text-align:center;top:215.78px;font-size:8.2px;font-weight:normal;color:#151515;">-</div>
<div class="t" style="left:261.70px;width:53.90px;text-align:center;top:215.78px;font-size:8.2px;font-weight:normal;color:#151515;">-</div>
<div class="t" style="left:315.60px;width:53.15px;text-align:center;top:215.78px;font-size:8.2px;font-weight:normal;color:#151515;">-</div>
<div class="t" style="left:368.75px;width:53.95px;text-align:center;top:215.78px;font-size:8.2px;font-weight:normal;color:#151515;">-</div>
<div class="t" style="left:439.80px;width:58.80px;text-align:center;top:215.78px;font-size:8.2px;font-weight:normal;color:#151515;">-</div>
<div class="t" style="left:498.60px;width:46.80px;text-align:center;top:215.78px;font-size:8.2px;font-weight:normal;color:#151515;">-</div>
<div class="t" style="left:545.40px;width:47.30px;text-align:center;top:215.78px;font-size:8.2px;font-weight:normal;color:#151515;">-</div>
<div class="t" style="left:592.70px;width:46.30px;text-align:center;top:215.78px;font-size:8.2px;font-weight:normal;color:#151515;">-</div>
<div class="t" style="left:639.00px;width:46.70px;text-align:center;top:215.78px;font-size:8.2px;font-weight:normal;color:#151515;">-</div>
<div class="t" style="left:685.70px;width:45.90px;text-align:center;top:215.78px;font-size:8.2px;font-weight:normal;color:#151515;">-</div>
<div class="t" style="left:731.60px;width:45.90px;text-align:center;top:215.78px;font-size:8.2px;font-weight:normal;color:#151515;">-</div>
<div class="t" style="left:777.50px;width:46.80px;text-align:center;top:215.78px;font-size:8.2px;font-weight:normal;color:#151515;">-</div>
<div class="t" style="left:824.30px;width:44.60px;text-align:center;top:215.78px;font-size:8.2px;font-weight:normal;color:#151515;">-</div>
<div class="t" style="left:868.90px;width:44.90px;text-align:center;top:215.78px;font-size:8.2px;font-weight:normal;color:#151515;">-</div>
<div class="t" style="left:913.80px;width:45.00px;text-align:center;top:215.78px;font-size:8.2px;font-weight:normal;color:#151515;">-</div>
<div class="t" style="left:958.80px;width:44.90px;text-align:center;top:215.78px;font-size:8.2px;font-weight:normal;color:#151515;">-</div>
<div class="t" style="left:31.10px;top:228.07px;font-size:8.2px;font-weight:normal;color:#151515;letter-spacing:0.098px;">Other Financing Cash Flows</div>
<div class="t" style="left:152.50px;width:58.00px;text-align:center;top:228.07px;font-size:8.2px;font-weight:normal;color:#151515;">-</div>
<div class="t" style="left:210.50px;width:51.20px;text-align:center;top:228.07px;font-size:8.2px;font-weight:normal;color:#151515;">-</div>
<div class="t" style="left:261.70px;width:53.90px;text-align:center;top:228.07px;font-size:8.2px;font-weight:normal;color:#151515;">-</div>
<div class="t" style="left:315.60px;width:53.15px;text-align:center;top:228.07px;font-size:8.2px;font-weight:normal;color:#151515;">-</div>
<div class="t" style="left:368.75px;width:53.95px;text-align:center;top:228.07px;font-size:8.2px;font-weight:normal;color:#151515;">-</div>
<div class="t" style="left:439.80px;width:58.80px;text-align:center;top:228.07px;font-size:8.2px;font-weight:normal;color:#151515;">-</div>
<div class="t" style="left:498.60px;width:46.80px;text-align:center;top:228.07px;font-size:8.2px;font-weight:normal;color:#151515;">-</div>
<div class="t" style="left:545.40px;width:47.30px;text-align:center;top:228.07px;font-size:8.2px;font-weight:normal;color:#151515;">-</div>
<div class="t" style="left:592.70px;width:46.30px;text-align:center;top:228.07px;font-size:8.2px;font-weight:normal;color:#151515;">-</div>
<div class="t" style="left:639.00px;width:46.70px;text-align:center;top:228.07px;font-size:8.2px;font-weight:normal;color:#151515;">-</div>
<div class="t" style="left:685.70px;width:45.90px;text-align:center;top:228.07px;font-size:8.2px;font-weight:normal;color:#151515;">-</div>
<div class="t" style="left:731.60px;width:45.90px;text-align:center;top:228.07px;font-size:8.2px;font-weight:normal;color:#151515;">-</div>
<div class="t" style="left:777.50px;width:46.80px;text-align:center;top:228.07px;font-size:8.2px;font-weight:normal;color:#151515;">-</div>
<div class="t" style="left:824.30px;width:44.60px;text-align:center;top:228.07px;font-size:8.2px;font-weight:normal;color:#151515;">-</div>
<div class="t" style="left:868.90px;width:44.90px;text-align:center;top:228.07px;font-size:8.2px;font-weight:normal;color:#151515;">-</div>
<div class="t" style="left:913.80px;width:45.00px;text-align:center;top:228.07px;font-size:8.2px;font-weight:normal;color:#151515;">-</div>
<div class="t" style="left:958.80px;width:44.90px;text-align:center;top:228.07px;font-size:8.2px;font-weight:normal;color:#151515;">-</div>
<div class="t" style="left:31.10px;top:240.36px;font-size:8.2px;font-weight:normal;color:#151515;letter-spacing:0.034px;">Financing Cash Flows</div>
<div class="t" style="left:152.50px;width:58.00px;text-align:center;top:240.36px;font-size:8.2px;font-weight:normal;color:#151515;">-1,200</div>
<div class="t" style="left:210.50px;width:51.20px;text-align:center;top:240.36px;font-size:8.2px;font-weight:normal;color:#151515;">-1,200</div>
<div class="t" style="left:261.70px;width:53.90px;text-align:center;top:240.36px;font-size:8.2px;font-weight:normal;color:#151515;">-1,200</div>
<div class="t" style="left:315.60px;width:53.15px;text-align:center;top:240.36px;font-size:8.2px;font-weight:normal;color:#151515;">0</div>
<div class="t" style="left:368.75px;width:53.95px;text-align:center;top:240.36px;font-size:8.2px;font-weight:normal;color:#151515;">0</div>
<div class="t" style="left:439.80px;width:58.80px;text-align:center;top:240.36px;font-size:8.2px;font-weight:normal;color:#151515;">-</div>
<div class="t" style="left:498.60px;width:46.80px;text-align:center;top:240.36px;font-size:8.2px;font-weight:normal;color:#151515;">-1,200</div>
<div class="t" style="left:545.40px;width:47.30px;text-align:center;top:240.36px;font-size:8.2px;font-weight:normal;color:#151515;">-1,200</div>
<div class="t" style="left:592.70px;width:46.30px;text-align:center;top:240.36px;font-size:8.2px;font-weight:normal;color:#151515;">-1,200</div>
<div class="t" style="left:639.00px;width:46.70px;text-align:center;top:240.36px;font-size:8.2px;font-weight:normal;color:#151515;">-1,200</div>
<div class="t" style="left:685.70px;width:45.90px;text-align:center;top:240.36px;font-size:8.2px;font-weight:normal;color:#151515;">-1,200</div>
<div class="t" style="left:731.60px;width:45.90px;text-align:center;top:240.36px;font-size:8.2px;font-weight:normal;color:#151515;">-1,200</div>
<div class="t" style="left:777.50px;width:46.80px;text-align:center;top:240.36px;font-size:8.2px;font-weight:normal;color:#151515;">-1,200</div>
<div class="t" style="left:824.30px;width:44.60px;text-align:center;top:240.36px;font-size:8.2px;font-weight:normal;color:#151515;">-1,200</div>
<div class="t" style="left:868.90px;width:44.90px;text-align:center;top:240.36px;font-size:8.2px;font-weight:normal;color:#151515;">-1,200</div>
<div class="t" style="left:913.80px;width:45.00px;text-align:center;top:240.36px;font-size:8.2px;font-weight:normal;color:#151515;">-1,200</div>
<div class="t" style="left:958.80px;width:44.90px;text-align:center;top:240.36px;font-size:8.2px;font-weight:normal;color:#151515;">-1,200</div>
<div class="t" style="left:31.10px;top:252.65px;font-size:8.2px;font-weight:normal;color:#151515;letter-spacing:0.022px;">Change In Cash Held</div>
<div class="t" style="left:152.50px;width:58.00px;text-align:center;top:252.65px;font-size:8.2px;font-weight:normal;color:#151515;">63,301</div>
<div class="t" style="left:210.50px;width:51.20px;text-align:center;top:252.65px;font-size:8.2px;font-weight:normal;color:#151515;">73,019</div>
<div class="t" style="left:261.70px;width:53.90px;text-align:center;top:252.65px;font-size:8.2px;font-weight:normal;color:#151515;">80,008</div>
<div class="t" style="left:315.60px;width:53.15px;text-align:center;top:252.65px;font-size:8.2px;font-weight:normal;color:#151515;">86,970</div>
<div class="t" style="left:368.75px;width:53.95px;text-align:center;top:252.65px;font-size:8.2px;font-weight:normal;color:#151515;">88,130</div>
<div class="t" style="left:439.80px;width:58.80px;text-align:center;top:252.65px;font-size:8.2px;font-weight:normal;color:#151515;">-50,000</div>
<div class="t" style="left:498.60px;width:46.80px;text-align:center;top:252.65px;font-size:8.2px;font-weight:normal;color:#151515;">36,345</div>
<div class="t" style="left:545.40px;width:47.30px;text-align:center;top:252.65px;font-size:8.2px;font-weight:normal;color:#151515;">58,929</div>
<div class="t" style="left:592.70px;width:46.30px;text-align:center;top:252.65px;font-size:8.2px;font-weight:normal;color:#151515;">59,169</div>
<div class="t" style="left:639.00px;width:46.70px;text-align:center;top:252.65px;font-size:8.2px;font-weight:normal;color:#151515;">59,409</div>
<div class="t" style="left:685.70px;width:45.90px;text-align:center;top:252.65px;font-size:8.2px;font-weight:normal;color:#151515;">59,649</div>
<div class="t" style="left:731.60px;width:45.90px;text-align:center;top:252.65px;font-size:8.2px;font-weight:normal;color:#151515;">59,889</div>
<div class="t" style="left:777.50px;width:46.80px;text-align:center;top:252.65px;font-size:8.2px;font-weight:normal;color:#151515;">60,129</div>
<div class="t" style="left:824.30px;width:44.60px;text-align:center;top:252.65px;font-size:8.2px;font-weight:normal;color:#151515;">62,581</div>
<div class="t" style="left:868.90px;width:44.90px;text-align:center;top:252.65px;font-size:8.2px;font-weight:normal;color:#151515;">62,821</div>
<div class="t" style="left:913.80px;width:45.00px;text-align:center;top:252.65px;font-size:8.2px;font-weight:normal;color:#151515;">63,061</div>
<div class="t" style="left:958.80px;width:44.90px;text-align:center;top:252.65px;font-size:8.2px;font-weight:normal;color:#151515;">63,301</div>
<div class="t" style="left:31.10px;top:264.94px;font-size:8.2px;font-weight:normal;color:#151515;letter-spacing:-0.088px;">Closing Cash</div>
<div class="t" style="left:152.50px;width:58.00px;text-align:center;top:264.94px;font-size:8.2px;font-weight:normal;color:#151515;">125,402</div>
<div class="t" style="left:210.50px;width:51.20px;text-align:center;top:264.94px;font-size:8.2px;font-weight:normal;color:#151515;">144,837</div>
<div class="t" style="left:261.70px;width:53.90px;text-align:center;top:264.94px;font-size:8.2px;font-weight:normal;color:#151515;">158,817</div>
<div class="t" style="left:315.60px;width:53.15px;text-align:center;top:264.94px;font-size:8.2px;font-weight:normal;color:#151515;">173,940</div>
<div class="t" style="left:368.75px;width:53.95px;text-align:center;top:264.94px;font-size:8.2px;font-weight:normal;color:#151515;">176,260</div>
<div class="t" style="left:439.80px;width:58.80px;text-align:center;top:264.94px;font-size:8.2px;font-weight:normal;color:#151515;">-28,710</div>
<div class="t" style="left:498.60px;width:46.80px;text-align:center;top:264.94px;font-size:8.2px;font-weight:normal;color:#151515;">71,490</div>
<div class="t" style="left:545.40px;width:47.30px;text-align:center;top:264.94px;font-size:8.2px;font-weight:normal;color:#151515;">116,658</div>
<div class="t" style="left:592.70px;width:46.30px;text-align:center;top:264.94px;font-size:8.2px;font-weight:normal;color:#151515;">117,138</div>
<div class="t" style="left:639.00px;width:46.70px;text-align:center;top:264.94px;font-size:8.2px;font-weight:normal;color:#151515;">117,618</div>
<div class="t" style="left:685.70px;width:45.90px;text-align:center;top:264.94px;font-size:8.2px;font-weight:normal;color:#151515;">118,098</div>
<div class="t" style="left:731.60px;width:45.90px;text-align:center;top:264.94px;font-size:8.2px;font-weight:normal;color:#151515;">118,578</div>
<div class="t" style="left:777.50px;width:46.80px;text-align:center;top:264.94px;font-size:8.2px;font-weight:normal;color:#151515;">119,058</div>
<div class="t" style="left:824.30px;width:44.60px;text-align:center;top:264.94px;font-size:8.2px;font-weight:normal;color:#151515;">123,962</div>
<div class="t" style="left:868.90px;width:44.90px;text-align:center;top:264.94px;font-size:8.2px;font-weight:normal;color:#151515;">124,442</div>
<div class="t" style="left:913.80px;width:45.00px;text-align:center;top:264.94px;font-size:8.2px;font-weight:normal;color:#151515;">124,922</div>
<div class="t" style="left:958.80px;width:44.90px;text-align:center;top:264.94px;font-size:8.2px;font-weight:normal;color:#151515;">125,402</div>
<div class="abs" style="left:29.3px;top:285.82px;width:393.40px;height:12.74px;background:#2F5597"></div>
<div class="abs" style="left:439.8px;top:285.82px;width:563.90px;height:12.74px;background:#2F5597"></div>
<div class="t" style="left:31.30px;top:288.52px;font-size:8.3px;font-weight:bold;color:#fff;">Cash Flow Statement 5 Years to December 2029</div>
<div class="t" style="left:439.80px;width:563.90px;text-align:center;top:288.52px;font-size:8.3px;font-weight:bold;color:#fff;">Cash Flow Statement Summer 2025</div>
<div class="abs" style="left:29.3px;top:556.20px;width:974.40px;height:12.74px;background:#2F5597"></div>
<div class="t" style="left:31.30px;top:558.90px;font-size:8.3px;font-weight:bold;color:#fff;">Income Statement 5 Years to December 2029</div>
<div class="t" style="left:439.80px;width:563.90px;text-align:center;top:558.90px;font-size:8.3px;font-weight:bold;color:#fff;">Income Statement Summer 2025</div>
<div class="abs" style="left:28.8px;top:303.9px;width:396.09999999999997px;height:230.89999999999998px;border:1px solid #E2E2E2;background:#fff"></div>
<svg class="abs" style="left:0;top:0" width="1024" height="605"><line x1="133.60" y1="313.40" x2="414.70" y2="313.40" stroke="#DEDEDE" stroke-width="0.8"/><line x1="133.60" y1="326.40" x2="414.70" y2="326.40" stroke="#DEDEDE" stroke-width="0.8"/><line x1="133.60" y1="339.40" x2="414.70" y2="339.40" stroke="#DEDEDE" stroke-width="0.8"/><line x1="133.60" y1="352.40" x2="414.70" y2="352.40" stroke="#DEDEDE" stroke-width="0.8"/><line x1="133.60" y1="365.40" x2="414.70" y2="365.40" stroke="#DEDEDE" stroke-width="0.8"/><line x1="133.60" y1="378.40" x2="414.70" y2="378.40" stroke="#DEDEDE" stroke-width="0.8"/><line x1="133.60" y1="391.40" x2="414.70" y2="391.40" stroke="#DEDEDE" stroke-width="0.8"/><line x1="133.60" y1="404.40" x2="414.70" y2="404.40" stroke="#DEDEDE" stroke-width="0.8"/><line x1="133.60" y1="417.40" x2="414.70" y2="417.40" stroke="#DEDEDE" stroke-width="0.8"/><line x1="133.60" y1="430.40" x2="414.70" y2="430.40" stroke="#DEDEDE" stroke-width="0.8"/><line x1="133.60" y1="443.40" x2="414.70" y2="443.40" stroke="#DEDEDE" stroke-width="0.8"/><line x1="133.60" y1="456.40" x2="414.70" y2="456.40" stroke="#DEDEDE" stroke-width="0.8"/><line x1="133.60" y1="456.40" x2="414.70" y2="456.40" stroke="#DEDEDE" stroke-width="0.8"/><line x1="43.30" y1="468.58" x2="414.70" y2="468.58" stroke="#DEDEDE" stroke-width="0.8"/><line x1="43.30" y1="480.76" x2="414.70" y2="480.76" stroke="#DEDEDE" stroke-width="0.8"/><line x1="43.30" y1="492.94" x2="414.70" y2="492.94" stroke="#DEDEDE" stroke-width="0.8"/><line x1="43.30" y1="505.12" x2="414.70" y2="505.12" stroke="#DEDEDE" stroke-width="0.8"/><line x1="43.30" y1="517.30" x2="414.70" y2="517.30" stroke="#DEDEDE" stroke-width="0.8"/><line x1="43.30" y1="529.48" x2="414.70" y2="529.48" stroke="#DEDEDE" stroke-width="0.8"/><line x1="43.30" y1="468.58" x2="43.30" y2="529.48" stroke="#DEDEDE" stroke-width="0.8"/><line x1="133.60" y1="456.40" x2="133.60" y2="529.48" stroke="#DEDEDE" stroke-width="0.8"/><line x1="189.82" y1="456.40" x2="189.82" y2="529.48" stroke="#DEDEDE" stroke-width="0.8"/><line x1="246.04" y1="456.40" x2="246.04" y2="529.48" stroke="#DEDEDE" stroke-width="0.8"/><line x1="302.26" y1="456.40" x2="302.26" y2="529.48" stroke="#DEDEDE" stroke-width="0.8"/><line x1="358.48" y1="456.40" x2="358.48" y2="529.48" stroke="#DEDEDE" stroke-width="0.8"/><line x1="414.70" y1="456.40" x2="414.70" y2="529.48" stroke="#DEDEDE" stroke-width="0.8"/><rect x="144.41" y="402.25" width="9.20" height="41.15" fill="#4472C4"/><rect x="200.63" y="395.94" width="9.20" height="47.46" fill="#4472C4"/><rect x="256.85" y="391.39" width="9.20" height="52.01" fill="#4472C4"/><rect x="313.07" y="386.87" width="9.20" height="56.53" fill="#4472C4"/><rect x="369.29" y="386.12" width="9.20" height="57.28" fill="#4472C4"/><rect x="169.81" y="443.40" width="9.20" height="0.90" fill="#A5A5A5"/><rect x="226.03" y="443.40" width="9.20" height="0.90" fill="#A5A5A5"/><rect x="282.25" y="443.40" width="9.20" height="0.90" fill="#A5A5A5"/><polyline points="161.71,402.25 217.93,395.94 274.15,391.39 330.37,386.87 386.59,386.12" fill="none" stroke="#FFC000" stroke-width="2.3" stroke-linejoin="round" stroke-linecap="round"/><polyline points="161.71,361.89 217.93,349.26 274.15,340.17 330.37,330.34 386.59,328.83" fill="none" stroke="#5B9BD5" stroke-width="2.3" stroke-linejoin="round" stroke-linecap="round"/><rect x="46.30" y="472.07" width="16.2" height="4.2" fill="#4472C4"/><rect x="46.30" y="484.25" width="16.2" height="4.2" fill="#ED7D31"/><rect x="46.30" y="496.43" width="16.2" height="4.2" fill="#A5A5A5"/><line x1="45.30" y1="510.81" x2="63.30" y2="510.81" stroke="#FFC000" stroke-width="1.8"/><line x1="45.30" y1="522.99" x2="63.30" y2="522.99" stroke="#5B9BD5" stroke-width="1.8"/></svg>
<div class="t" style="left:67.30px;width:60px;text-align:right;top:310.25px;font-size:7.0px;color:#595959">200,000</div>
<div class="t" style="left:67.30px;width:60px;text-align:right;top:323.25px;font-size:7.0px;color:#595959">180,000</div>
<div class="t" style="left:67.30px;width:60px;text-align:right;top:336.25px;font-size:7.0px;color:#595959">160,000</div>
<div class="t" style="left:67.30px;width:60px;text-align:right;top:349.25px;font-size:7.0px;color:#595959">140,000</div>
<div class="t" style="left:67.30px;width:60px;text-align:right;top:362.25px;font-size:7.0px;color:#595959">120,000</div>
<div class="t" style="left:67.30px;width:60px;text-align:right;top:375.25px;font-size:7.0px;color:#595959">100,000</div>
<div class="t" style="left:67.30px;width:60px;text-align:right;top:388.25px;font-size:7.0px;color:#595959">80,000</div>
<div class="t" style="left:67.30px;width:60px;text-align:right;top:401.25px;font-size:7.0px;color:#595959">60,000</div>
<div class="t" style="left:67.30px;width:60px;text-align:right;top:414.25px;font-size:7.0px;color:#595959">40,000</div>
<div class="t" style="left:67.30px;width:60px;text-align:right;top:427.25px;font-size:7.0px;color:#595959">20,000</div>
<div class="t" style="left:67.30px;width:60px;text-align:right;top:440.25px;font-size:7.0px;color:#595959">0</div>
<div class="t" style="left:67.30px;width:60px;text-align:right;top:453.25px;font-size:7.0px;color:#595959">-20,000</div>
<div class="t" style="left:133.60px;width:56.22px;text-align:center;top:459.77px;font-size:6.8px;color:#595959">2025</div>
<div class="t" style="left:189.82px;width:56.22px;text-align:center;top:459.77px;font-size:6.8px;color:#595959">2026</div>
<div class="t" style="left:246.04px;width:56.22px;text-align:center;top:459.77px;font-size:6.8px;color:#595959">2027</div>
<div class="t" style="left:302.26px;width:56.22px;text-align:center;top:459.77px;font-size:6.8px;color:#595959">2028</div>
<div class="t" style="left:358.48px;width:56.22px;text-align:center;top:459.77px;font-size:6.8px;color:#595959">2029</div>
<div class="t" style="left:64.30px;top:471.47px;font-size:6.8px;color:#595959">Operating Cash Flows</div>
<div class="t" style="left:133.60px;width:56.22px;text-align:center;top:471.95px;font-size:6.8px;color:#595959">63,301</div>
<div class="t" style="left:189.82px;width:56.22px;text-align:center;top:471.95px;font-size:6.8px;color:#595959">73,019</div>
<div class="t" style="left:246.04px;width:56.22px;text-align:center;top:471.95px;font-size:6.8px;color:#595959">80,008</div>
<div class="t" style="left:302.26px;width:56.22px;text-align:center;top:471.95px;font-size:6.8px;color:#595959">86,970</div>
<div class="t" style="left:358.48px;width:56.22px;text-align:center;top:471.95px;font-size:6.8px;color:#595959">88,130</div>
<div class="t" style="left:64.30px;top:483.65px;font-size:6.8px;color:#595959">Investing Cash Flows</div>
<div class="t" style="left:133.60px;width:56.22px;text-align:center;top:484.13px;font-size:6.8px;color:#595959">0</div>
<div class="t" style="left:189.82px;width:56.22px;text-align:center;top:484.13px;font-size:6.8px;color:#595959">0</div>
<div class="t" style="left:246.04px;width:56.22px;text-align:center;top:484.13px;font-size:6.8px;color:#595959">0</div>
<div class="t" style="left:302.26px;width:56.22px;text-align:center;top:484.13px;font-size:6.8px;color:#595959">0</div>
<div class="t" style="left:358.48px;width:56.22px;text-align:center;top:484.13px;font-size:6.8px;color:#595959">0</div>
<div class="t" style="left:64.30px;top:495.83px;font-size:6.8px;color:#595959">Financing Cash Flows</div>
<div class="t" style="left:133.60px;width:56.22px;text-align:center;top:496.31px;font-size:6.8px;color:#595959">-1,200</div>
<div class="t" style="left:189.82px;width:56.22px;text-align:center;top:496.31px;font-size:6.8px;color:#595959">-1,200</div>
<div class="t" style="left:246.04px;width:56.22px;text-align:center;top:496.31px;font-size:6.8px;color:#595959">-1,200</div>
<div class="t" style="left:302.26px;width:56.22px;text-align:center;top:496.31px;font-size:6.8px;color:#595959">0</div>
<div class="t" style="left:358.48px;width:56.22px;text-align:center;top:496.31px;font-size:6.8px;color:#595959">0</div>
<div class="t" style="left:64.30px;top:508.01px;font-size:6.8px;color:#595959">Change In Cash Held</div>
<div class="t" style="left:133.60px;width:56.22px;text-align:center;top:508.49px;font-size:6.8px;color:#595959">63,301</div>
<div class="t" style="left:189.82px;width:56.22px;text-align:center;top:508.49px;font-size:6.8px;color:#595959">73,019</div>
<div class="t" style="left:246.04px;width:56.22px;text-align:center;top:508.49px;font-size:6.8px;color:#595959">80,008</div>
<div class="t" style="left:302.26px;width:56.22px;text-align:center;top:508.49px;font-size:6.8px;color:#595959">86,970</div>
<div class="t" style="left:358.48px;width:56.22px;text-align:center;top:508.49px;font-size:6.8px;color:#595959">88,130</div>
<div class="t" style="left:64.30px;top:520.19px;font-size:6.8px;color:#595959">Closing Cash</div>
<div class="t" style="left:133.60px;width:56.22px;text-align:center;top:520.67px;font-size:6.8px;color:#595959">125,402</div>
<div class="t" style="left:189.82px;width:56.22px;text-align:center;top:520.67px;font-size:6.8px;color:#595959">144,837</div>
<div class="t" style="left:246.04px;width:56.22px;text-align:center;top:520.67px;font-size:6.8px;color:#595959">158,817</div>
<div class="t" style="left:302.26px;width:56.22px;text-align:center;top:520.67px;font-size:6.8px;color:#595959">173,940</div>
<div class="t" style="left:358.48px;width:56.22px;text-align:center;top:520.67px;font-size:6.8px;color:#595959">176,260</div>
<div class="abs" style="left:439.2px;top:302.0px;width:568.8px;height:230.39999999999998px;border:1px solid #E2E2E2;background:#fff"></div>
<svg class="abs" style="left:0;top:0" width="1024" height="605"><line x1="544.50" y1="311.30" x2="997.26" y2="311.30" stroke="#DEDEDE" stroke-width="0.8"/><line x1="544.50" y1="325.60" x2="997.26" y2="325.60" stroke="#DEDEDE" stroke-width="0.8"/><line x1="544.50" y1="339.90" x2="997.26" y2="339.90" stroke="#DEDEDE" stroke-width="0.8"/><line x1="544.50" y1="354.20" x2="997.26" y2="354.20" stroke="#DEDEDE" stroke-width="0.8"/><line x1="544.50" y1="368.50" x2="997.26" y2="368.50" stroke="#DEDEDE" stroke-width="0.8"/><line x1="544.50" y1="382.80" x2="997.26" y2="382.80" stroke="#DEDEDE" stroke-width="0.8"/><line x1="544.50" y1="397.10" x2="997.26" y2="397.10" stroke="#DEDEDE" stroke-width="0.8"/><line x1="544.50" y1="411.40" x2="997.26" y2="411.40" stroke="#DEDEDE" stroke-width="0.8"/><line x1="544.50" y1="425.70" x2="997.26" y2="425.70" stroke="#DEDEDE" stroke-width="0.8"/><line x1="544.50" y1="440.00" x2="997.26" y2="440.00" stroke="#DEDEDE" stroke-width="0.8"/><line x1="544.50" y1="454.30" x2="997.26" y2="454.30" stroke="#DEDEDE" stroke-width="0.8"/><line x1="544.50" y1="454.40" x2="997.26" y2="454.40" stroke="#DEDEDE" stroke-width="0.8"/><line x1="453.30" y1="466.57" x2="997.26" y2="466.57" stroke="#DEDEDE" stroke-width="0.8"/><line x1="453.30" y1="478.74" x2="997.26" y2="478.74" stroke="#DEDEDE" stroke-width="0.8"/><line x1="453.30" y1="490.91" x2="997.26" y2="490.91" stroke="#DEDEDE" stroke-width="0.8"/><line x1="453.30" y1="503.08" x2="997.26" y2="503.08" stroke="#DEDEDE" stroke-width="0.8"/><line x1="453.30" y1="515.25" x2="997.26" y2="515.25" stroke="#DEDEDE" stroke-width="0.8"/><line x1="453.30" y1="527.42" x2="997.26" y2="527.42" stroke="#DEDEDE" stroke-width="0.8"/><line x1="453.30" y1="466.57" x2="453.30" y2="527.42" stroke="#DEDEDE" stroke-width="0.8"/><line x1="544.50" y1="454.40" x2="544.50" y2="527.42" stroke="#DEDEDE" stroke-width="0.8"/><line x1="582.23" y1="454.40" x2="582.23" y2="527.42" stroke="#DEDEDE" stroke-width="0.8"/><line x1="619.96" y1="454.40" x2="619.96" y2="527.42" stroke="#DEDEDE" stroke-width="0.8"/><line x1="657.69" y1="454.40" x2="657.69" y2="527.42" stroke="#DEDEDE" stroke-width="0.8"/><line x1="695.42" y1="454.40" x2="695.42" y2="527.42" stroke="#DEDEDE" stroke-width="0.8"/><line x1="733.15" y1="454.40" x2="733.15" y2="527.42" stroke="#DEDEDE" stroke-width="0.8"/><line x1="770.88" y1="454.40" x2="770.88" y2="527.42" stroke="#DEDEDE" stroke-width="0.8"/><line x1="808.61" y1="454.40" x2="808.61" y2="527.42" stroke="#DEDEDE" stroke-width="0.8"/><line x1="846.34" y1="454.40" x2="846.34" y2="527.42" stroke="#DEDEDE" stroke-width="0.8"/><line x1="884.07" y1="454.40" x2="884.07" y2="527.42" stroke="#DEDEDE" stroke-width="0.8"/><line x1="921.80" y1="454.40" x2="921.80" y2="527.42" stroke="#DEDEDE" stroke-width="0.8"/><line x1="959.53" y1="454.40" x2="959.53" y2="527.42" stroke="#DEDEDE" stroke-width="0.8"/><line x1="997.26" y1="454.40" x2="997.26" y2="527.42" stroke="#DEDEDE" stroke-width="0.8"/><rect x="551.96" y="385.91" width="6.40" height="25.49" fill="#4472C4"/><rect x="589.69" y="385.41" width="6.40" height="25.99" fill="#4472C4"/><rect x="627.42" y="369.27" width="6.40" height="42.13" fill="#4472C4"/><rect x="665.15" y="369.09" width="6.40" height="42.31" fill="#4472C4"/><rect x="702.88" y="368.92" width="6.40" height="42.48" fill="#4472C4"/><rect x="740.61" y="368.75" width="6.40" height="42.65" fill="#4472C4"/><rect x="778.34" y="368.58" width="6.40" height="42.82" fill="#4472C4"/><rect x="816.07" y="368.41" width="6.40" height="42.99" fill="#4472C4"/><rect x="853.80" y="366.65" width="6.40" height="44.75" fill="#4472C4"/><rect x="891.53" y="366.48" width="6.40" height="44.92" fill="#4472C4"/><rect x="929.26" y="366.31" width="6.40" height="45.09" fill="#4472C4"/><rect x="966.99" y="366.14" width="6.40" height="45.26" fill="#4472C4"/><rect x="560.16" y="411.40" width="6.40" height="35.75" fill="#ED7D31"/><rect x="606.10" y="411.40" width="6.40" height="0.90" fill="#A5A5A5"/><rect x="643.83" y="411.40" width="6.40" height="0.90" fill="#A5A5A5"/><rect x="681.55" y="411.40" width="6.40" height="0.90" fill="#A5A5A5"/><rect x="719.28" y="411.40" width="6.40" height="0.90" fill="#A5A5A5"/><rect x="757.01" y="411.40" width="6.40" height="0.90" fill="#A5A5A5"/><rect x="794.75" y="411.40" width="6.40" height="0.90" fill="#A5A5A5"/><rect x="832.47" y="411.40" width="6.40" height="0.90" fill="#A5A5A5"/><rect x="870.20" y="411.40" width="6.40" height="0.90" fill="#A5A5A5"/><rect x="907.93" y="411.40" width="6.40" height="0.90" fill="#A5A5A5"/><rect x="945.66" y="411.40" width="6.40" height="0.90" fill="#A5A5A5"/><rect x="983.39" y="411.40" width="6.40" height="0.90" fill="#A5A5A5"/><polyline points="563.37,447.15 601.10,385.41 638.83,369.27 676.55,369.09 714.28,368.92 752.01,368.75 789.75,368.58 827.47,368.41 865.20,366.65 902.93,366.48 940.66,366.31 978.39,366.14" fill="none" stroke="#FFD347" stroke-width="2.0" stroke-linejoin="round" stroke-linecap="round"/><polyline points="563.37,431.93 601.10,360.28 638.83,327.99 676.55,327.65 714.28,327.30 752.01,326.96 789.75,326.62 827.47,326.27 865.20,322.77 902.93,322.42 940.66,322.08 978.39,321.74" fill="none" stroke="#2E75B6" stroke-width="2.0" stroke-linejoin="round" stroke-linecap="round"/><rect x="456.30" y="470.05" width="16.2" height="4.2" fill="#4472C4"/><rect x="456.30" y="482.22" width="16.2" height="4.2" fill="#ED7D31"/><rect x="456.30" y="494.39" width="16.2" height="4.2" fill="#A5A5A5"/><line x1="455.30" y1="508.76" x2="473.30" y2="508.76" stroke="#FFD347" stroke-width="1.8"/><line x1="455.30" y1="520.94" x2="473.30" y2="520.94" stroke="#2E75B6" stroke-width="1.8"/></svg>
<div class="t" style="left:477.50px;width:60px;text-align:right;top:308.15px;font-size:7.0px;color:#595959">140,000</div>
<div class="t" style="left:477.50px;width:60px;text-align:right;top:322.45px;font-size:7.0px;color:#595959">120,000</div>
<div class="t" style="left:477.50px;width:60px;text-align:right;top:336.75px;font-size:7.0px;color:#595959">100,000</div>
<div class="t" style="left:477.50px;width:60px;text-align:right;top:351.05px;font-size:7.0px;color:#595959">80,000</div>
<div class="t" style="left:477.50px;width:60px;text-align:right;top:365.35px;font-size:7.0px;color:#595959">60,000</div>
<div class="t" style="left:477.50px;width:60px;text-align:right;top:379.65px;font-size:7.0px;color:#595959">40,000</div>
<div class="t" style="left:477.50px;width:60px;text-align:right;top:393.95px;font-size:7.0px;color:#595959">20,000</div>
<div class="t" style="left:477.50px;width:60px;text-align:right;top:408.25px;font-size:7.0px;color:#595959">0</div>
<div class="t" style="left:477.50px;width:60px;text-align:right;top:422.55px;font-size:7.0px;color:#595959">-20,000</div>
<div class="t" style="left:477.50px;width:60px;text-align:right;top:436.85px;font-size:7.0px;color:#595959">-40,000</div>
<div class="t" style="left:477.50px;width:60px;text-align:right;top:451.15px;font-size:7.0px;color:#595959">-60,000</div>
<div class="t" style="left:544.50px;width:37.73px;text-align:center;top:457.76px;font-size:6.8px;color:#595959">Jan</div>
<div class="t" style="left:582.23px;width:37.73px;text-align:center;top:457.76px;font-size:6.8px;color:#595959">Feb</div>
<div class="t" style="left:619.96px;width:37.73px;text-align:center;top:457.76px;font-size:6.8px;color:#595959">Mar</div>
<div class="t" style="left:657.69px;width:37.73px;text-align:center;top:457.76px;font-size:6.8px;color:#595959">Apr</div>
<div class="t" style="left:695.42px;width:37.73px;text-align:center;top:457.76px;font-size:6.8px;color:#595959">May</div>
<div class="t" style="left:733.15px;width:37.73px;text-align:center;top:457.76px;font-size:6.8px;color:#595959">Jun</div>
<div class="t" style="left:770.88px;width:37.73px;text-align:center;top:457.76px;font-size:6.8px;color:#595959">Jul</div>
<div class="t" style="left:808.61px;width:37.73px;text-align:center;top:457.76px;font-size:6.8px;color:#595959">Aug</div>
<div class="t" style="left:846.34px;width:37.73px;text-align:center;top:457.76px;font-size:6.8px;color:#595959">Sep</div>
<div class="t" style="left:884.07px;width:37.73px;text-align:center;top:457.76px;font-size:6.8px;color:#595959">Oct</div>
<div class="t" style="left:921.80px;width:37.73px;text-align:center;top:457.76px;font-size:6.8px;color:#595959">Nov</div>
<div class="t" style="left:959.53px;width:37.73px;text-align:center;top:457.76px;font-size:6.8px;color:#595959">Dec</div>
<div class="t" style="left:474.30px;top:469.46px;font-size:6.8px;color:#595959">Operating Cash Flows</div>
<div class="t" style="left:544.50px;width:37.73px;text-align:center;top:469.93px;font-size:6.8px;color:#595959">35,645</div>
<div class="t" style="left:582.23px;width:37.73px;text-align:center;top:469.93px;font-size:6.8px;color:#595959">36,345</div>
<div class="t" style="left:619.96px;width:37.73px;text-align:center;top:469.93px;font-size:6.8px;color:#595959">58,929</div>
<div class="t" style="left:657.69px;width:37.73px;text-align:center;top:469.93px;font-size:6.8px;color:#595959">59,169</div>
<div class="t" style="left:695.42px;width:37.73px;text-align:center;top:469.93px;font-size:6.8px;color:#595959">59,409</div>
<div class="t" style="left:733.15px;width:37.73px;text-align:center;top:469.93px;font-size:6.8px;color:#595959">59,649</div>
<div class="t" style="left:770.88px;width:37.73px;text-align:center;top:469.93px;font-size:6.8px;color:#595959">59,889</div>
<div class="t" style="left:808.61px;width:37.73px;text-align:center;top:469.93px;font-size:6.8px;color:#595959">60,129</div>
<div class="t" style="left:846.34px;width:37.73px;text-align:center;top:469.93px;font-size:6.8px;color:#595959">62,581</div>
<div class="t" style="left:884.07px;width:37.73px;text-align:center;top:469.93px;font-size:6.8px;color:#595959">62,821</div>
<div class="t" style="left:921.80px;width:37.73px;text-align:center;top:469.93px;font-size:6.8px;color:#595959">63,061</div>
<div class="t" style="left:959.53px;width:37.73px;text-align:center;top:469.93px;font-size:6.8px;color:#595959">63,301</div>
<div class="t" style="left:474.30px;top:481.63px;font-size:6.8px;color:#595959">Investing Cash Flows</div>
<div class="t" style="left:544.50px;width:37.73px;text-align:center;top:482.10px;font-size:6.8px;color:#595959">-50,000</div>
<div class="t" style="left:582.23px;width:37.73px;text-align:center;top:482.10px;font-size:6.8px;color:#595959">0</div>
<div class="t" style="left:619.96px;width:37.73px;text-align:center;top:482.10px;font-size:6.8px;color:#595959">0</div>
<div class="t" style="left:657.69px;width:37.73px;text-align:center;top:482.10px;font-size:6.8px;color:#595959">0</div>
<div class="t" style="left:695.42px;width:37.73px;text-align:center;top:482.10px;font-size:6.8px;color:#595959">0</div>
<div class="t" style="left:733.15px;width:37.73px;text-align:center;top:482.10px;font-size:6.8px;color:#595959">0</div>
<div class="t" style="left:770.88px;width:37.73px;text-align:center;top:482.10px;font-size:6.8px;color:#595959">0</div>
<div class="t" style="left:808.61px;width:37.73px;text-align:center;top:482.10px;font-size:6.8px;color:#595959">0</div>
<div class="t" style="left:846.34px;width:37.73px;text-align:center;top:482.10px;font-size:6.8px;color:#595959">0</div>
<div class="t" style="left:884.07px;width:37.73px;text-align:center;top:482.10px;font-size:6.8px;color:#595959">0</div>
<div class="t" style="left:921.80px;width:37.73px;text-align:center;top:482.10px;font-size:6.8px;color:#595959">0</div>
<div class="t" style="left:959.53px;width:37.73px;text-align:center;top:482.10px;font-size:6.8px;color:#595959">0</div>
<div class="t" style="left:474.30px;top:493.80px;font-size:6.8px;color:#595959">Financing Cash Flows</div>
<div class="t" style="left:544.50px;width:37.73px;text-align:center;top:494.27px;font-size:6.8px;color:#595959">0</div>
<div class="t" style="left:582.23px;width:37.73px;text-align:center;top:494.27px;font-size:6.8px;color:#595959">-1,200</div>
<div class="t" style="left:619.96px;width:37.73px;text-align:center;top:494.27px;font-size:6.8px;color:#595959">-1,200</div>
<div class="t" style="left:657.69px;width:37.73px;text-align:center;top:494.27px;font-size:6.8px;color:#595959">-1,200</div>
<div class="t" style="left:695.42px;width:37.73px;text-align:center;top:494.27px;font-size:6.8px;color:#595959">-1,200</div>
<div class="t" style="left:733.15px;width:37.73px;text-align:center;top:494.27px;font-size:6.8px;color:#595959">-1,200</div>
<div class="t" style="left:770.88px;width:37.73px;text-align:center;top:494.27px;font-size:6.8px;color:#595959">-1,200</div>
<div class="t" style="left:808.61px;width:37.73px;text-align:center;top:494.27px;font-size:6.8px;color:#595959">-1,200</div>
<div class="t" style="left:846.34px;width:37.73px;text-align:center;top:494.27px;font-size:6.8px;color:#595959">-1,200</div>
<div class="t" style="left:884.07px;width:37.73px;text-align:center;top:494.27px;font-size:6.8px;color:#595959">-1,200</div>
<div class="t" style="left:921.80px;width:37.73px;text-align:center;top:494.27px;font-size:6.8px;color:#595959">-1,200</div>
<div class="t" style="left:959.53px;width:37.73px;text-align:center;top:494.27px;font-size:6.8px;color:#595959">-1,200</div>
<div class="t" style="left:474.30px;top:505.97px;font-size:6.8px;color:#595959">Change In Cash Held</div>
<div class="t" style="left:544.50px;width:37.73px;text-align:center;top:506.44px;font-size:6.8px;color:#595959">-50,000</div>
<div class="t" style="left:582.23px;width:37.73px;text-align:center;top:506.44px;font-size:6.8px;color:#595959">36,345</div>
<div class="t" style="left:619.96px;width:37.73px;text-align:center;top:506.44px;font-size:6.8px;color:#595959">58,929</div>
<div class="t" style="left:657.69px;width:37.73px;text-align:center;top:506.44px;font-size:6.8px;color:#595959">59,169</div>
<div class="t" style="left:695.42px;width:37.73px;text-align:center;top:506.44px;font-size:6.8px;color:#595959">59,409</div>
<div class="t" style="left:733.15px;width:37.73px;text-align:center;top:506.44px;font-size:6.8px;color:#595959">59,649</div>
<div class="t" style="left:770.88px;width:37.73px;text-align:center;top:506.44px;font-size:6.8px;color:#595959">59,889</div>
<div class="t" style="left:808.61px;width:37.73px;text-align:center;top:506.44px;font-size:6.8px;color:#595959">60,129</div>
<div class="t" style="left:846.34px;width:37.73px;text-align:center;top:506.44px;font-size:6.8px;color:#595959">62,581</div>
<div class="t" style="left:884.07px;width:37.73px;text-align:center;top:506.44px;font-size:6.8px;color:#595959">62,821</div>
<div class="t" style="left:921.80px;width:37.73px;text-align:center;top:506.44px;font-size:6.8px;color:#595959">63,061</div>
<div class="t" style="left:959.53px;width:37.73px;text-align:center;top:506.44px;font-size:6.8px;color:#595959">63,301</div>
<div class="t" style="left:474.30px;top:518.14px;font-size:6.8px;color:#595959">Closing Cash</div>
<div class="t" style="left:544.50px;width:37.73px;text-align:center;top:518.62px;font-size:6.8px;color:#595959">-28,710</div>
<div class="t" style="left:582.23px;width:37.73px;text-align:center;top:518.62px;font-size:6.8px;color:#595959">71,490</div>
<div class="t" style="left:619.96px;width:37.73px;text-align:center;top:518.62px;font-size:6.8px;color:#595959">116,658</div>
<div class="t" style="left:657.69px;width:37.73px;text-align:center;top:518.62px;font-size:6.8px;color:#595959">117,138</div>
<div class="t" style="left:695.42px;width:37.73px;text-align:center;top:518.62px;font-size:6.8px;color:#595959">117,618</div>
<div class="t" style="left:733.15px;width:37.73px;text-align:center;top:518.62px;font-size:6.8px;color:#595959">118,098</div>
<div class="t" style="left:770.88px;width:37.73px;text-align:center;top:518.62px;font-size:6.8px;color:#595959">118,578</div>
<div class="t" style="left:808.61px;width:37.73px;text-align:center;top:518.62px;font-size:6.8px;color:#595959">119,058</div>
<div class="t" style="left:846.34px;width:37.73px;text-align:center;top:518.62px;font-size:6.8px;color:#595959">123,962</div>
<div class="t" style="left:884.07px;width:37.73px;text-align:center;top:518.62px;font-size:6.8px;color:#595959">124,442</div>
<div class="t" style="left:921.80px;width:37.73px;text-align:center;top:518.62px;font-size:6.8px;color:#595959">124,922</div>
<div class="t" style="left:959.53px;width:37.73px;text-align:center;top:518.62px;font-size:6.8px;color:#595959">125,402</div>
<div class="abs" style="left:1010.8px;top:52px;width:13.2px;height:522px;background:#EAEBEC"></div>
<div class="abs" style="left:1012.3px;top:53.2px;width:11px;height:520.8px;background:#F8F8F8;border-radius:5.5px"></div>
<svg class="abs" style="left:1011px;top:52px" width="13" height="522"><path d="M6.85 3.9 L9.8 7.9 L3.9 7.9 Z" fill="#6A6A6A" stroke="#6A6A6A" stroke-width="0.5" stroke-linejoin="round"/><rect x="4" y="11.3" width="5.8" height="155.2" rx="2.9" fill="#6B6B6B"/><path d="M6.85 518.9 L9.8 514.9 L3.9 514.9 Z" fill="#6A6A6A" stroke="#6A6A6A" stroke-width="0.5" stroke-linejoin="round"/></svg>
<div class="abs" style="left:0;top:573.3px;width:1024px;height:20.7px;background:#E8E9EB"></div>
<svg class="abs" style="left:0;top:573px" width="60" height="21"><path d="M21 7 l-3.2 3.5 l3.2 3.5" fill="none" stroke="#9A9A9A" stroke-width="0.9"/><path d="M39 7 l3.2 3.5 l-3.2 3.5" fill="none" stroke="#444" stroke-width="0.9"/></svg>
<div class="abs" style="left:121.5px;top:577px;width:0.8px;height:13px;background:#C9C9C9"></div>
<div class="abs" style="left:169px;top:577px;width:0.8px;height:13px;background:#C9C9C9"></div>
<div class="abs" style="left:219.5px;top:577px;width:0.8px;height:13px;background:#C9C9C9"></div>
<div class="abs" style="left:270px;top:577px;width:0.8px;height:13px;background:#C9C9C9"></div>
<div class="abs" style="left:598.6px;top:577px;width:0.8px;height:13px;background:#C9C9C9"></div>
<div class="abs" style="left:645.8px;top:577px;width:0.8px;height:13px;background:#C9C9C9"></div>
<div class="abs" style="left:696px;top:577px;width:0.8px;height:13px;background:#C9C9C9"></div>
<div class="abs" style="left:747px;top:577px;width:0.8px;height:13px;background:#C9C9C9"></div>
<div class="abs" style="left:877.5px;top:577px;width:0.8px;height:13px;background:#C9C9C9"></div>
<div class="t" style="left:80.6px;top:579.9px;font-size:9.2px;color:#3A3A3A;letter-spacing:0.278px">How To</div>
<div class="t" style="left:130.4px;top:579.9px;font-size:9.2px;color:#3A3A3A;letter-spacing:-0.302px">IS 2025</div>
<div class="t" style="left:177px;top:579.9px;font-size:9.2px;color:#3A3A3A;letter-spacing:-0.381px">CF 2025</div>
<div class="t" style="left:227.8px;top:579.9px;font-size:9.2px;color:#3A3A3A;letter-spacing:-0.349px">BS 2025</div>
<div class="t" style="left:280px;top:579.9px;font-size:9.2px;color:#3A3A3A;letter-spacing:-0.053px">Days Total Hire Sheet 2025</div>
<div class="t" style="left:539.5px;top:579.9px;font-size:9.2px;color:#3A3A3A;letter-spacing:-0.490px">CAPEX 2025</div>
<div class="t" style="left:607.6px;top:579.9px;font-size:9.2px;color:#3A3A3A;letter-spacing:-0.302px">IS 2026</div>
<div class="t" style="left:654px;top:579.9px;font-size:9.2px;color:#3A3A3A;letter-spacing:-0.331px">CF 2026</div>
<div class="t" style="left:704.7px;top:579.9px;font-size:9.2px;color:#3A3A3A;letter-spacing:-0.282px">BS 2026</div>
<div class="t" style="left:756.9px;top:579.9px;font-size:9.2px;color:#3A3A3A;letter-spacing:-0.037px">Days Total Hire Sheet 2026</div>
<div class="t" style="left:887.3px;top:579.9px;font-size:9.2px;color:#3A3A3A;width:13.2px;overflow:hidden;letter-spacing:0.000px">Stat</div>
<div class="abs" style="left:404px;top:573px;width:124px;height:19.5px;background:#fff;border-radius:0 0 3px 3px"></div>
<div class="t" style="left:409px;top:578.4px;font-size:9.2px;color:#1A1A1A;-webkit-text-stroke:0.35px #1A1A1A;letter-spacing:0.070px">Statements Summary 2025</div>
<div class="abs" style="left:409px;top:588.5px;width:113px;height:1.6px;background:#107C41"></div>
<svg class="abs" style="left:900px;top:572px" width="124" height="22">
<rect x="8" y="9.6" width="2" height="2" fill="#333"/><rect x="10.8" y="9.6" width="2" height="2" fill="#333"/><rect x="13.6" y="9.6" width="2" height="2" fill="#333"/>
<path d="M28.6 11 h8.6 M32.9 6.7 v8.6" stroke="#333" stroke-width="1.05"/>
<rect x="54.1" y="7.6" width="1.3" height="1.3" fill="#333"/><rect x="54.1" y="10.4" width="1.3" height="1.3" fill="#333"/><rect x="54.1" y="13.2" width="1.3" height="1.3" fill="#333"/>
<rect x="65.8" y="6.3" width="45.7" height="10.6" rx="5.3" fill="#F7F7F8"/>
<path d="M72.8 8.6 L68.8 11.4 L72.8 14.2 Z" fill="#6A6A6A"/><rect x="77" y="8.7" width="19.7" height="5.4" rx="2.7" fill="#6A6A6A"/><path d="M104.6 8.6 L108.6 11.4 L104.6 14.2 Z" fill="#6A6A6A"/>
</svg>
<div class="abs" style="left:0;top:594.3px;width:1024px;height:10.7px;background:#F3F3F3;border-top:0.6px solid #DCDCDC"></div>
<div class="t" style="left:7.8px;top:599.4px;font-size:6.8px;color:#707070">Ready</div>
<div class="t" style="left:73.4px;top:599.2px;font-size:6.9px;color:#222;font-weight:bold;letter-spacing:-0.07px">Accessibility: Investigate</div>
<svg class="abs" style="left:0;top:594px" width="1024" height="11">
<rect x="40.5" y="3.9" width="9" height="8" fill="none" stroke="#666" stroke-width="0.8"/><rect x="40.5" y="3.7" width="9" height="1.6" fill="#555"/>
<circle cx="44" cy="8" r="0.8" fill="#555"/><circle cx="46.5" cy="8" r="0.8" fill="#555"/><circle cx="45.3" cy="9.8" r="1" fill="#222"/>
<circle cx="65.8" cy="4.6" r="1.3" fill="none" stroke="#444" stroke-width="0.8"/><path d="M62 5.5 q1.5 -1.6 2.5 0 M69.6 5.5 q-1.5 -1.6 -2.5 0 M64.3 7 v4 M67.3 7 v2.5 l1.6 -1.6" fill="none" stroke="#444" stroke-width="0.8"/>
<rect x="826" y="0.6" width="26.5" height="11" fill="#DEDEDE"/>
<rect x="834.5" y="3.8" width="9" height="8" fill="none" stroke="#444" stroke-width="0.8"/><path d="M834.5 6.3 h9 M834.5 8.8 h9 M837.5 3.8 v8 M840.5 3.8 v8" stroke="#444" stroke-width="0.7"/>
<rect x="861" y="3.8" width="9.5" height="8" fill="none" stroke="#555" stroke-width="0.8"/><rect x="863.3" y="5.6" width="5" height="4.5" fill="none" stroke="#555" stroke-width="0.7"/>
<path d="M887.5 11 v-7.2 h10 v7.2 M892.5 3.8 v4.2" fill="none" stroke="#555" stroke-width="0.8"/>
<line x1="910.2" y1="7.6" x2="915" y2="7.6" stroke="#444" stroke-width="0.8"/>
<line x1="918.3" y1="7.8" x2="985" y2="7.8" stroke="#A0A0A0" stroke-width="0.8"/>
<rect x="948.8" y="4.2" width="2.8" height="7" fill="#444"/>
<path d="M987.6 7.6 h5.6 M990.4 4.8 v5.6" stroke="#444" stroke-width="0.8"/>
</svg>
<div class="t" style="left:1001.8px;top:599.6px;font-size:6.6px;color:#555">96%</div>
</body></html>
